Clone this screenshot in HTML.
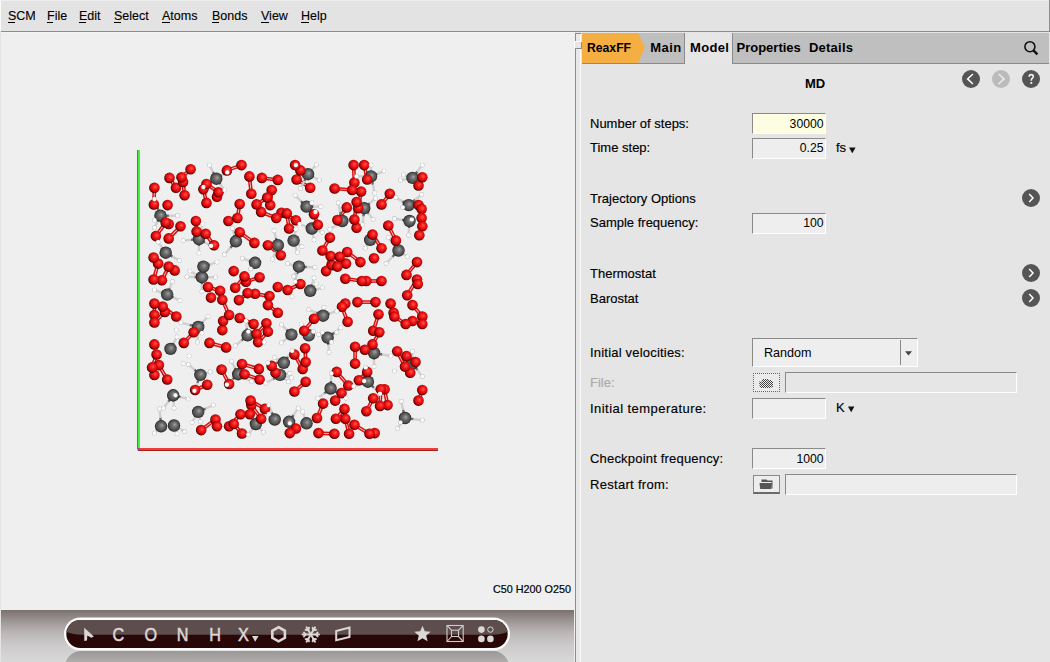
<!DOCTYPE html>
<html><head><meta charset="utf-8">
<style>
html,body{margin:0;padding:0;}
body{width:1050px;height:662px;position:relative;overflow:hidden;background:#e5e5e5;font-family:"Liberation Sans",sans-serif;color:#000;}
.a{position:absolute;}
.t{position:absolute;white-space:pre;line-height:1;}
#menubar{left:0;top:0;width:1050px;height:31px;background:#e3e3e3;}
#menuline{left:1px;top:31px;width:1049px;height:1px;background:#8e8e8e;}
.mi{font-size:12.5px;-webkit-text-stroke:0.12px #000;}
.mi u{text-decoration:none;border-bottom:1px solid #000;}
#viewer{left:1px;top:32px;width:574px;height:630px;background:#efefef;}
.lbl{font-size:13px;color:#000;-webkit-text-stroke:0.15px #000;}
.inp{position:absolute;box-sizing:border-box;border-top:1px solid #8a8a8a;border-left:1px solid #8a8a8a;border-right:1px solid #fff;border-bottom:1px solid #fff;background:#eeeeee;}
.val{font-size:12.2px;text-align:right;}
.circ{position:absolute;width:18px;height:18px;border-radius:50%;background:#555;}
</style></head><body>
<!-- menu -->
<div class="a" id="menubar"></div>
<div class="a" style="left:0;top:0;width:1px;height:31px;background:#fafafa"></div>
<div class="a" id="menuline"></div>
<div class="a" style="left:1049px;top:0;width:1px;height:32px;background:#8e8e8e"></div>
<div class="a" style="left:0;top:0;width:1049px;height:1px;background:#eeeeee"></div>
<div class="t mi" style="left:8px;top:9.5px">SCM</div>
<div class="t mi" style="left:47px;top:9.5px">File</div>
<div class="t mi" style="left:79px;top:9.5px">Edit</div>
<div class="t mi" style="left:114px;top:9.5px">Select</div>
<div class="t mi" style="left:162px;top:9.5px">Atoms</div>
<div class="t mi" style="left:212px;top:9.5px">Bonds</div>
<div class="t mi" style="left:261px;top:9.5px">View</div>
<div class="t mi" style="left:301px;top:9.5px">Help</div>
<div class="a" style="left:8px;top:22px;width:7px;height:1px;background:#000"></div>
<div class="a" style="left:47px;top:22px;width:6px;height:1px;background:#000"></div>
<div class="a" style="left:79px;top:22px;width:7px;height:1px;background:#000"></div>
<div class="a" style="left:114px;top:22px;width:7px;height:1px;background:#000"></div>
<div class="a" style="left:162px;top:22px;width:8px;height:1px;background:#000"></div>
<div class="a" style="left:212px;top:22px;width:7px;height:1px;background:#000"></div>
<div class="a" style="left:261px;top:22px;width:8px;height:1px;background:#000"></div>
<div class="a" style="left:301px;top:22px;width:8px;height:1px;background:#000"></div>

<!-- left viewer -->
<div class="a" id="viewer"></div>
<div class="a" style="left:0;top:32px;width:1px;height:630px;background:#e4e4e4"></div>
<div class="a" style="left:1px;top:32px;width:574px;height:1px;background:#f4f4f4"></div>
<div id="mol"><svg class="a" style="left:0;top:0" width="575" height="662" viewBox="0 0 575 662">
<defs>
<radialGradient id="gO" cx="0.54" cy="0.46" fx="0.6" fy="0.4" r="0.55"><stop offset="0" stop-color="#ff5656"/><stop offset="0.4" stop-color="#f41a1a"/><stop offset="0.72" stop-color="#d00606"/><stop offset="0.9" stop-color="#700000"/><stop offset="1" stop-color="#200000"/></radialGradient>
<radialGradient id="gC" cx="0.5" cy="0.5" fx="0.58" fy="0.4" r="0.5"><stop offset="0" stop-color="#a0a0a0"/><stop offset="0.4" stop-color="#6e6e6e"/><stop offset="0.8" stop-color="#4c4c4c"/><stop offset="1" stop-color="#1e1e1e"/></radialGradient>
<radialGradient id="gH" cx="0.5" cy="0.5" fx="0.55" fy="0.45" r="0.5"><stop offset="0" stop-color="#fff"/><stop offset="0.7" stop-color="#f6f6f6"/><stop offset="1" stop-color="#b0b0b0"/></radialGradient>
</defs>
<rect x="137" y="150" width="3" height="299" fill="#44f044"/><rect x="137" y="150" width="1" height="299" fill="#2a9a2a"/>
<rect x="138" y="448" width="300" height="3" fill="#f23c3c"/><rect x="138" y="450" width="300" height="1" fill="#a02020"/>
<rect x="137.5" y="448.5" width="2" height="2" fill="#5050e8"/>
<g><line x1="276.5" y1="372.1" x2="272.7" y2="365.3" stroke="#e01010" stroke-width="1.5"/><line x1="274.5" y1="373.2" x2="270.8" y2="366.4" stroke="#e01010" stroke-width="1.5"/><line x1="278.4" y1="311.8" x2="268.6" y2="304.3" stroke="#e01010" stroke-width="1.5"/><line x1="277.1" y1="313.6" x2="267.3" y2="306.0" stroke="#e01010" stroke-width="1.5"/><line x1="227.2" y1="171.4" x2="241.9" y2="166.1" stroke="#e01010" stroke-width="1.5"/><line x1="226.5" y1="169.4" x2="241.1" y2="164.1" stroke="#e01010" stroke-width="1.5"/><line x1="371.6" y1="235.2" x2="380.6" y2="248.8" stroke="#e01010" stroke-width="1.5"/><line x1="373.4" y1="234.0" x2="382.5" y2="247.6" stroke="#e01010" stroke-width="1.5"/><line x1="288.1" y1="291.0" x2="300.9" y2="285.0" stroke="#e01010" stroke-width="1.5"/><line x1="287.1" y1="289.0" x2="300.0" y2="283.0" stroke="#e01010" stroke-width="1.5"/><line x1="313.2" y1="318.0" x2="303.3" y2="330.1" stroke="#e01010" stroke-width="1.5"/><line x1="314.9" y1="319.4" x2="305.1" y2="331.5" stroke="#e01010" stroke-width="1.5"/><line x1="328.9" y1="237.1" x2="321.4" y2="249.9" stroke="#e01010" stroke-width="1.5"/><line x1="330.8" y1="238.2" x2="323.3" y2="251.0" stroke="#e01010" stroke-width="1.5"/><line x1="209.2" y1="344.0" x2="225.8" y2="348.5" stroke="#e01010" stroke-width="1.5"/><line x1="209.8" y1="341.8" x2="226.4" y2="346.4" stroke="#e01010" stroke-width="1.5"/><line x1="266.6" y1="196.7" x2="256.0" y2="203.5" stroke="#e01010" stroke-width="1.5"/><line x1="267.8" y1="198.5" x2="257.2" y2="205.3" stroke="#e01010" stroke-width="1.5"/><line x1="277.9" y1="178.8" x2="262.0" y2="176.9" stroke="#e01010" stroke-width="1.5"/><line x1="277.6" y1="181.0" x2="261.8" y2="179.0" stroke="#e01010" stroke-width="1.5"/><line x1="192.8" y1="331.6" x2="183.0" y2="342.2" stroke="#e01010" stroke-width="1.5"/><line x1="194.4" y1="333.1" x2="184.6" y2="343.6" stroke="#e01010" stroke-width="1.5"/><line x1="405.9" y1="366.1" x2="398.1" y2="350.7" stroke="#e01010" stroke-width="1.5"/><line x1="404.0" y1="367.1" x2="396.2" y2="351.7" stroke="#e01010" stroke-width="1.5"/><line x1="285.7" y1="213.6" x2="288.0" y2="228.7" stroke="#e01010" stroke-width="1.5"/><line x1="287.9" y1="213.3" x2="290.2" y2="228.4" stroke="#e01010" stroke-width="1.5"/><line x1="301.2" y1="169.6" x2="295.9" y2="164.3" stroke="#e01010" stroke-width="1.5"/><line x1="299.6" y1="171.2" x2="294.4" y2="165.9" stroke="#e01010" stroke-width="1.5"/><line x1="229.9" y1="427.0" x2="241.3" y2="415.0" stroke="#e01010" stroke-width="1.5"/><line x1="228.3" y1="425.5" x2="239.7" y2="413.5" stroke="#e01010" stroke-width="1.5"/><line x1="375.5" y1="301.0" x2="357.4" y2="301.0" stroke="#e01010" stroke-width="1.5"/><line x1="375.5" y1="303.2" x2="357.4" y2="303.2" stroke="#e01010" stroke-width="1.5"/><line x1="204.8" y1="234.5" x2="213.1" y2="246.0" stroke="#e01010" stroke-width="1.5"/><line x1="206.6" y1="233.2" x2="214.9" y2="244.7" stroke="#e01010" stroke-width="1.5"/><line x1="318.1" y1="418.4" x2="324.1" y2="404.1" stroke="#e01010" stroke-width="1.5"/><line x1="316.0" y1="417.5" x2="322.1" y2="403.2" stroke="#e01010" stroke-width="1.5"/><line x1="362.1" y1="279.9" x2="345.4" y2="277.6" stroke="#e01010" stroke-width="1.5"/><line x1="361.8" y1="282.1" x2="345.1" y2="279.8" stroke="#e01010" stroke-width="1.5"/><line x1="348.6" y1="321.4" x2="343.0" y2="306.5" stroke="#e01010" stroke-width="1.5"/><line x1="346.5" y1="322.1" x2="340.9" y2="307.2" stroke="#e01010" stroke-width="1.5"/><line x1="295.1" y1="392.4" x2="306.4" y2="382.6" stroke="#e01010" stroke-width="1.5"/><line x1="293.7" y1="390.7" x2="305.0" y2="380.9" stroke="#e01010" stroke-width="1.5"/><line x1="262.0" y1="418.1" x2="252.2" y2="404.5" stroke="#e01010" stroke-width="1.5"/><line x1="260.3" y1="419.4" x2="250.4" y2="405.8" stroke="#e01010" stroke-width="1.5"/><line x1="355.5" y1="202.0" x2="353.3" y2="219.3" stroke="#e01010" stroke-width="1.5"/><line x1="357.7" y1="202.3" x2="355.4" y2="219.6" stroke="#e01010" stroke-width="1.5"/><line x1="236.0" y1="288.5" x2="245.4" y2="277.1" stroke="#e01010" stroke-width="1.5"/><line x1="234.3" y1="287.1" x2="243.7" y2="275.7" stroke="#e01010" stroke-width="1.5"/><line x1="281.5" y1="254.4" x2="268.6" y2="244.3" stroke="#e01010" stroke-width="1.5"/><line x1="280.1" y1="256.2" x2="267.3" y2="246.0" stroke="#e01010" stroke-width="1.5"/><line x1="254.0" y1="323.0" x2="240.1" y2="317.0" stroke="#e01010" stroke-width="1.5"/><line x1="253.2" y1="325.0" x2="239.3" y2="319.0" stroke="#e01010" stroke-width="1.5"/><line x1="352.2" y1="188.9" x2="334.7" y2="187.4" stroke="#e01010" stroke-width="1.5"/><line x1="352.0" y1="191.1" x2="334.5" y2="189.6" stroke="#e01010" stroke-width="1.5"/><line x1="355.4" y1="182.4" x2="354.7" y2="165.1" stroke="#e01010" stroke-width="1.5"/><line x1="353.3" y1="182.5" x2="352.5" y2="165.2" stroke="#e01010" stroke-width="1.5"/><line x1="313.0" y1="214.6" x2="316.8" y2="225.1" stroke="#e01010" stroke-width="1.5"/><line x1="315.1" y1="213.8" x2="318.8" y2="224.4" stroke="#e01010" stroke-width="1.5"/><line x1="276.7" y1="217.0" x2="261.6" y2="210.9" stroke="#e01010" stroke-width="1.5"/><line x1="275.8" y1="219.0" x2="260.7" y2="213.0" stroke="#e01010" stroke-width="1.5"/><line x1="361.1" y1="261.2" x2="347.8" y2="251.1" stroke="#e01010" stroke-width="1.5"/><line x1="359.7" y1="263.0" x2="346.5" y2="252.8" stroke="#e01010" stroke-width="1.5"/><line x1="327.2" y1="271.5" x2="331.7" y2="256.4" stroke="#e01010" stroke-width="1.5"/><line x1="325.0" y1="270.8" x2="329.6" y2="255.7" stroke="#e01010" stroke-width="1.5"/><line x1="408.2" y1="295.9" x2="418.0" y2="280.0" stroke="#e01010" stroke-width="1.5"/><line x1="406.3" y1="294.7" x2="416.1" y2="278.9" stroke="#e01010" stroke-width="1.5"/><line x1="411.7" y1="305.9" x2="421.5" y2="317.2" stroke="#e01010" stroke-width="1.5"/><line x1="413.3" y1="304.4" x2="423.2" y2="315.7" stroke="#e01010" stroke-width="1.5"/><line x1="255.0" y1="242.0" x2="240.3" y2="231.4" stroke="#e01010" stroke-width="1.5"/><line x1="253.7" y1="243.8" x2="239.1" y2="233.2" stroke="#e01010" stroke-width="1.5"/><line x1="157.1" y1="263.3" x2="152.5" y2="279.2" stroke="#e01010" stroke-width="1.5"/><line x1="159.2" y1="263.9" x2="154.7" y2="279.8" stroke="#e01010" stroke-width="1.5"/><line x1="412.2" y1="322.0" x2="422.0" y2="325.1" stroke="#e01010" stroke-width="1.5"/><line x1="412.8" y1="319.9" x2="422.6" y2="323.0" stroke="#e01010" stroke-width="1.5"/><line x1="220.6" y1="370.1" x2="228.2" y2="384.5" stroke="#e01010" stroke-width="1.5"/><line x1="222.5" y1="369.1" x2="230.1" y2="383.5" stroke="#e01010" stroke-width="1.5"/><line x1="153.3" y1="303.6" x2="153.3" y2="315.0" stroke="#e01010" stroke-width="1.5"/><line x1="155.5" y1="303.6" x2="155.5" y2="315.0" stroke="#e01010" stroke-width="1.5"/><line x1="366.4" y1="371.1" x2="358.1" y2="379.4" stroke="#e01010" stroke-width="1.5"/><line x1="368.0" y1="372.7" x2="359.7" y2="381.0" stroke="#e01010" stroke-width="1.5"/><line x1="267.1" y1="330.8" x2="257.3" y2="341.4" stroke="#e01010" stroke-width="1.5"/><line x1="268.8" y1="332.3" x2="258.9" y2="342.9" stroke="#e01010" stroke-width="1.5"/><line x1="214.9" y1="418.6" x2="200.5" y2="429.2" stroke="#e01010" stroke-width="1.5"/><line x1="216.2" y1="420.4" x2="201.8" y2="430.9" stroke="#e01010" stroke-width="1.5"/><line x1="303.6" y1="368.3" x2="295.3" y2="354.0" stroke="#e01010" stroke-width="1.5"/><line x1="301.7" y1="369.4" x2="293.4" y2="355.1" stroke="#e01010" stroke-width="1.5"/><line x1="182.3" y1="178.0" x2="191.3" y2="170.2" stroke="#e01010" stroke-width="1.5"/><line x1="180.8" y1="176.4" x2="189.9" y2="168.5" stroke="#e01010" stroke-width="1.5"/><line x1="419.6" y1="186.0" x2="423.3" y2="177.6" stroke="#e01010" stroke-width="1.5"/><line x1="417.5" y1="185.0" x2="421.3" y2="176.7" stroke="#e01010" stroke-width="1.5"/><line x1="259.2" y1="367.8" x2="242.3" y2="363.0" stroke="#e01010" stroke-width="1.5"/><line x1="258.6" y1="369.9" x2="241.7" y2="365.1" stroke="#e01010" stroke-width="1.5"/><line x1="265.5" y1="408.0" x2="251.1" y2="399.7" stroke="#e01010" stroke-width="1.5"/><line x1="264.4" y1="409.9" x2="250.0" y2="401.6" stroke="#e01010" stroke-width="1.5"/><line x1="221.3" y1="300.3" x2="228.1" y2="315.4" stroke="#e01010" stroke-width="1.5"/><line x1="223.3" y1="299.4" x2="230.1" y2="314.5" stroke="#e01010" stroke-width="1.5"/><line x1="281.0" y1="213.7" x2="295.4" y2="221.2" stroke="#e01010" stroke-width="1.5"/><line x1="282.1" y1="211.7" x2="296.4" y2="219.3" stroke="#e01010" stroke-width="1.5"/><line x1="360.1" y1="191.3" x2="357.0" y2="208.0" stroke="#e01010" stroke-width="1.5"/><line x1="362.2" y1="191.7" x2="359.2" y2="208.4" stroke="#e01010" stroke-width="1.5"/><line x1="259.3" y1="276.1" x2="245.7" y2="280.7" stroke="#e01010" stroke-width="1.5"/><line x1="260.0" y1="278.2" x2="246.4" y2="282.8" stroke="#e01010" stroke-width="1.5"/><line x1="223.4" y1="330.2" x2="224.2" y2="321.1" stroke="#e01010" stroke-width="1.5"/><line x1="221.2" y1="330.0" x2="222.0" y2="320.9" stroke="#e01010" stroke-width="1.5"/><line x1="336.0" y1="401.3" x2="342.4" y2="393.8" stroke="#e01010" stroke-width="1.5"/><line x1="334.3" y1="399.9" x2="340.7" y2="392.3" stroke="#e01010" stroke-width="1.5"/><line x1="194.8" y1="221.1" x2="195.5" y2="231.6" stroke="#e01010" stroke-width="1.5"/><line x1="197.0" y1="220.9" x2="197.7" y2="231.5" stroke="#e01010" stroke-width="1.5"/><line x1="164.8" y1="221.9" x2="155.0" y2="235.5" stroke="#e01010" stroke-width="1.5"/><line x1="166.6" y1="223.2" x2="156.8" y2="236.7" stroke="#e01010" stroke-width="1.5"/><line x1="393.8" y1="317.4" x2="405.1" y2="324.9" stroke="#e01010" stroke-width="1.5"/><line x1="395.0" y1="315.6" x2="406.3" y2="323.1" stroke="#e01010" stroke-width="1.5"/><line x1="388.7" y1="404.9" x2="385.6" y2="389.1" stroke="#e01010" stroke-width="1.5"/><line x1="386.5" y1="405.3" x2="383.5" y2="389.5" stroke="#e01010" stroke-width="1.5"/><line x1="387.4" y1="226.0" x2="394.9" y2="241.1" stroke="#e01010" stroke-width="1.5"/><line x1="389.3" y1="225.0" x2="396.9" y2="240.1" stroke="#e01010" stroke-width="1.5"/><line x1="306.8" y1="362.0" x2="306.2" y2="348.1" stroke="#e01010" stroke-width="1.5"/><line x1="304.6" y1="362.1" x2="304.0" y2="348.2" stroke="#e01010" stroke-width="1.5"/><line x1="162.9" y1="280.7" x2="169.7" y2="267.1" stroke="#e01010" stroke-width="1.5"/><line x1="160.9" y1="279.7" x2="167.7" y2="266.1" stroke="#e01010" stroke-width="1.5"/><line x1="168.1" y1="378.9" x2="159.8" y2="364.6" stroke="#e01010" stroke-width="1.5"/><line x1="166.2" y1="380.0" x2="157.9" y2="365.7" stroke="#e01010" stroke-width="1.5"/><line x1="260.0" y1="378.4" x2="244.9" y2="373.1" stroke="#e01010" stroke-width="1.5"/><line x1="259.3" y1="380.5" x2="244.2" y2="375.2" stroke="#e01010" stroke-width="1.5"/><line x1="370.0" y1="432.9" x2="354.9" y2="423.8" stroke="#e01010" stroke-width="1.5"/><line x1="368.9" y1="434.8" x2="353.8" y2="425.7" stroke="#e01010" stroke-width="1.5"/><line x1="378.3" y1="331.8" x2="371.5" y2="343.9" stroke="#e01010" stroke-width="1.5"/><line x1="380.2" y1="332.9" x2="373.4" y2="345.0" stroke="#e01010" stroke-width="1.5"/><line x1="389.6" y1="304.0" x2="392.6" y2="313.0" stroke="#e01010" stroke-width="1.5"/><line x1="391.6" y1="303.3" x2="394.7" y2="312.3" stroke="#e01010" stroke-width="1.5"/><line x1="350.1" y1="433.6" x2="346.4" y2="418.5" stroke="#e01010" stroke-width="1.5"/><line x1="348.0" y1="434.1" x2="344.2" y2="419.0" stroke="#e01010" stroke-width="1.5"/><line x1="185.7" y1="195.2" x2="184.1" y2="181.9" stroke="#e01010" stroke-width="1.5"/><line x1="183.5" y1="195.4" x2="182.0" y2="182.1" stroke="#e01010" stroke-width="1.5"/><line x1="269.6" y1="295.0" x2="255.3" y2="292.7" stroke="#e01010" stroke-width="1.5"/><line x1="269.3" y1="297.2" x2="254.9" y2="294.9" stroke="#e01010" stroke-width="1.5"/><line x1="332.3" y1="266.2" x2="346.2" y2="264.7" stroke="#e01010" stroke-width="1.5"/><line x1="332.0" y1="264.0" x2="345.9" y2="262.5" stroke="#e01010" stroke-width="1.5"/><line x1="202.4" y1="189.5" x2="205.4" y2="203.1" stroke="#e01010" stroke-width="1.5"/><line x1="204.5" y1="189.0" x2="207.5" y2="202.6" stroke="#e01010" stroke-width="1.5"/><line x1="238.5" y1="218.2" x2="240.8" y2="204.2" stroke="#e01010" stroke-width="1.5"/><line x1="236.3" y1="217.8" x2="238.6" y2="203.9" stroke="#e01010" stroke-width="1.5"/><line x1="176.9" y1="315.6" x2="163.3" y2="305.8" stroke="#e01010" stroke-width="1.5"/><line x1="175.6" y1="317.4" x2="162.0" y2="307.5" stroke="#e01010" stroke-width="1.5"/><line x1="195.6" y1="391.0" x2="207.7" y2="385.8" stroke="#e01010" stroke-width="1.5"/><line x1="194.7" y1="389.0" x2="206.8" y2="383.7" stroke="#e01010" stroke-width="1.5"/><line x1="338.6" y1="256.4" x2="336.4" y2="266.4" stroke="#e01010" stroke-width="1.5"/><line x1="340.8" y1="256.9" x2="338.5" y2="266.9" stroke="#e01010" stroke-width="1.5"/><line x1="232.8" y1="424.7" x2="241.1" y2="434.2" stroke="#e01010" stroke-width="1.5"/><line x1="234.5" y1="423.3" x2="242.8" y2="432.7" stroke="#e01010" stroke-width="1.5"/><line x1="381.1" y1="405.9" x2="381.9" y2="389.3" stroke="#e01010" stroke-width="1.5"/><line x1="378.9" y1="405.8" x2="379.7" y2="389.2" stroke="#e01010" stroke-width="1.5"/><line x1="318.5" y1="434.2" x2="334.4" y2="434.9" stroke="#e01010" stroke-width="1.5"/><line x1="318.6" y1="432.0" x2="334.5" y2="432.7" stroke="#e01010" stroke-width="1.5"/><line x1="252.4" y1="193.7" x2="250.5" y2="176.3" stroke="#e01010" stroke-width="1.5"/><line x1="250.2" y1="193.9" x2="248.3" y2="176.6" stroke="#e01010" stroke-width="1.5"/><line x1="419.6" y1="401.0" x2="423.4" y2="390.4" stroke="#e01010" stroke-width="1.5"/><line x1="417.5" y1="400.2" x2="421.3" y2="389.7" stroke="#e01010" stroke-width="1.5"/><line x1="389.0" y1="193.1" x2="380.7" y2="203.7" stroke="#e01010" stroke-width="1.5"/><line x1="390.7" y1="194.5" x2="382.4" y2="205.1" stroke="#e01010" stroke-width="1.5"/><line x1="349.1" y1="384.8" x2="337.5" y2="371.2" stroke="#e01010" stroke-width="1.5"/><line x1="347.5" y1="386.2" x2="335.8" y2="372.6" stroke="#e01010" stroke-width="1.5"/><line x1="265.6" y1="322.5" x2="255.8" y2="333.1" stroke="#e01010" stroke-width="1.5"/><line x1="267.2" y1="324.0" x2="257.4" y2="334.6" stroke="#e01010" stroke-width="1.5"/><line x1="153.1" y1="367.7" x2="157.7" y2="354.9" stroke="#e01010" stroke-width="1.5"/><line x1="151.0" y1="367.0" x2="155.6" y2="354.2" stroke="#e01010" stroke-width="1.5"/><line x1="372.3" y1="397.8" x2="365.5" y2="410.7" stroke="#e01010" stroke-width="1.5"/><line x1="374.2" y1="398.9" x2="367.4" y2="411.7" stroke="#e01010" stroke-width="1.5"/><line x1="164.1" y1="311.2" x2="153.6" y2="321.7" stroke="#e01010" stroke-width="1.5"/><line x1="165.7" y1="312.7" x2="155.1" y2="323.3" stroke="#e01010" stroke-width="1.5"/><line x1="345.9" y1="206.7" x2="336.6" y2="219.3" stroke="#e01010" stroke-width="1.5"/><line x1="347.7" y1="208.1" x2="338.3" y2="220.6" stroke="#e01010" stroke-width="1.5"/><line x1="411.3" y1="372.4" x2="407.5" y2="355.8" stroke="#e01010" stroke-width="1.5"/><line x1="409.2" y1="372.9" x2="405.4" y2="356.3" stroke="#e01010" stroke-width="1.5"/><line x1="176.9" y1="187.2" x2="170.4" y2="177.3" stroke="#e01010" stroke-width="1.5"/><line x1="175.0" y1="188.4" x2="168.5" y2="178.6" stroke="#e01010" stroke-width="1.5"/><line x1="356.2" y1="363.6" x2="356.2" y2="346.7" stroke="#e01010" stroke-width="1.5"/><line x1="354.0" y1="363.6" x2="354.0" y2="346.7" stroke="#e01010" stroke-width="1.5"/><line x1="377.5" y1="313.9" x2="372.2" y2="330.5" stroke="#e01010" stroke-width="1.5"/><line x1="379.6" y1="314.5" x2="374.3" y2="331.1" stroke="#e01010" stroke-width="1.5"/><line x1="153.3" y1="187.7" x2="152.8" y2="204.4" stroke="#e01010" stroke-width="1.5"/><line x1="155.5" y1="187.8" x2="155.0" y2="204.4" stroke="#e01010" stroke-width="1.5"/><line x1="270.6" y1="189.9" x2="269.1" y2="205.0" stroke="#e01010" stroke-width="1.5"/><line x1="272.8" y1="190.1" x2="271.3" y2="205.2" stroke="#e01010" stroke-width="1.5"/><line x1="310.8" y1="186.8" x2="297.2" y2="178.5" stroke="#e01010" stroke-width="1.5"/><line x1="309.7" y1="188.7" x2="296.1" y2="180.4" stroke="#e01010" stroke-width="1.5"/><line x1="420.5" y1="209.0" x2="421.2" y2="226.3" stroke="#e01010" stroke-width="1.5"/><line x1="422.7" y1="208.9" x2="423.4" y2="226.2" stroke="#e01010" stroke-width="1.5"/><line x1="368.3" y1="179.2" x2="365.2" y2="164.9" stroke="#e01010" stroke-width="1.5"/><line x1="366.1" y1="179.7" x2="363.1" y2="165.3" stroke="#e01010" stroke-width="1.5"/><line x1="205.8" y1="184.9" x2="217.9" y2="193.2" stroke="#e01010" stroke-width="1.5"/><line x1="207.1" y1="183.1" x2="219.2" y2="191.4" stroke="#e01010" stroke-width="1.5"/><line x1="246.9" y1="292.2" x2="238.2" y2="299.3" stroke="#e01010" stroke-width="1.5"/><line x1="248.3" y1="293.9" x2="239.6" y2="301.0" stroke="#e01010" stroke-width="1.5"/><line x1="381.5" y1="279.9" x2="366.4" y2="279.9" stroke="#e01010" stroke-width="1.5"/><line x1="381.5" y1="282.1" x2="366.4" y2="282.1" stroke="#e01010" stroke-width="1.5"/><line x1="417.5" y1="205.4" x2="420.5" y2="218.2" stroke="#e01010" stroke-width="1.5"/><line x1="419.6" y1="204.9" x2="422.6" y2="217.7" stroke="#e01010" stroke-width="1.5"/><line x1="179.7" y1="225.5" x2="167.9" y2="237.6" stroke="#e01010" stroke-width="1.5"/><line x1="181.3" y1="227.1" x2="169.5" y2="239.1" stroke="#e01010" stroke-width="1.5"/><line x1="295.2" y1="427.7" x2="289.2" y2="432.2" stroke="#e01010" stroke-width="1.5"/><line x1="296.6" y1="429.4" x2="290.5" y2="434.0" stroke="#e01010" stroke-width="1.5"/><line x1="343.7" y1="408.2" x2="335.1" y2="418.0" stroke="#e01010" stroke-width="1.5"/><line x1="345.4" y1="409.6" x2="336.7" y2="419.5" stroke="#e01010" stroke-width="1.5"/><line x1="207.6" y1="288.1" x2="219.7" y2="291.8" stroke="#e01010" stroke-width="1.5"/><line x1="208.3" y1="286.0" x2="220.4" y2="289.7" stroke="#e01010" stroke-width="1.5"/><line x1="407.3" y1="275.6" x2="417.9" y2="262.8" stroke="#e01010" stroke-width="1.5"/><line x1="405.6" y1="274.2" x2="416.2" y2="261.4" stroke="#e01010" stroke-width="1.5"/><line x1="173.2" y1="395.3" x2="180.8" y2="397.2" stroke="#6a6a6a" stroke-width="2.4"/><line x1="180.8" y1="397.2" x2="188.3" y2="399.1" stroke="#d0d0d0" stroke-width="2.4"/><line x1="306.5" y1="206.6" x2="300.8" y2="201.0" stroke="#6a6a6a" stroke-width="2.4"/><line x1="300.8" y1="201.0" x2="295.1" y2="195.3" stroke="#d0d0d0" stroke-width="2.4"/><line x1="408.7" y1="205.1" x2="402.3" y2="201.4" stroke="#6a6a6a" stroke-width="2.4"/><line x1="402.3" y1="201.4" x2="395.9" y2="197.6" stroke="#d0d0d0" stroke-width="2.4"/><line x1="289.1" y1="421.8" x2="293.6" y2="415.0" stroke="#6a6a6a" stroke-width="2.4"/><line x1="293.6" y1="415.0" x2="298.2" y2="408.2" stroke="#d0d0d0" stroke-width="2.4"/><line x1="200.4" y1="374.9" x2="197.4" y2="382.9" stroke="#6a6a6a" stroke-width="2.4"/><line x1="197.4" y1="382.9" x2="194.4" y2="390.8" stroke="#d0d0d0" stroke-width="2.4"/><line x1="167.2" y1="294.6" x2="173.6" y2="297.6" stroke="#6a6a6a" stroke-width="2.4"/><line x1="173.6" y1="297.6" x2="180.0" y2="300.6" stroke="#d0d0d0" stroke-width="2.4"/><line x1="367.9" y1="381.7" x2="374.0" y2="387.8" stroke="#6a6a6a" stroke-width="2.4"/><line x1="374.0" y1="387.8" x2="380.0" y2="393.8" stroke="#d0d0d0" stroke-width="2.4"/><line x1="405.0" y1="418.0" x2="403.1" y2="409.7" stroke="#6a6a6a" stroke-width="2.4"/><line x1="403.1" y1="409.7" x2="401.2" y2="401.4" stroke="#d0d0d0" stroke-width="2.4"/><line x1="308.0" y1="174.2" x2="304.2" y2="181.3" stroke="#6a6a6a" stroke-width="2.4"/><line x1="304.2" y1="181.3" x2="300.4" y2="188.5" stroke="#d0d0d0" stroke-width="2.4"/><line x1="201.9" y1="277.2" x2="201.9" y2="284.4" stroke="#6a6a6a" stroke-width="2.4"/><line x1="201.9" y1="284.4" x2="201.9" y2="291.5" stroke="#d0d0d0" stroke-width="2.4"/><line x1="408.7" y1="205.1" x2="405.7" y2="206.3" stroke="#6a6a6a" stroke-width="2.4"/><line x1="405.7" y1="206.3" x2="402.7" y2="207.4" stroke="#d0d0d0" stroke-width="2.4"/><line x1="306.5" y1="423.3" x2="304.6" y2="417.6" stroke="#6a6a6a" stroke-width="2.4"/><line x1="304.6" y1="417.6" x2="302.7" y2="411.9" stroke="#d0d0d0" stroke-width="2.4"/><line x1="216.3" y1="178.7" x2="209.9" y2="182.9" stroke="#6a6a6a" stroke-width="2.4"/><line x1="209.9" y1="182.9" x2="203.4" y2="187.0" stroke="#d0d0d0" stroke-width="2.4"/><line x1="364.2" y1="208.2" x2="369.8" y2="203.2" stroke="#6a6a6a" stroke-width="2.4"/><line x1="369.8" y1="203.2" x2="375.5" y2="198.3" stroke="#d0d0d0" stroke-width="2.4"/><line x1="173.2" y1="395.3" x2="174.4" y2="395.3" stroke="#6a6a6a" stroke-width="2.4"/><line x1="174.4" y1="395.3" x2="175.5" y2="395.3" stroke="#d0d0d0" stroke-width="2.4"/><line x1="371.0" y1="176.4" x2="372.9" y2="184.7" stroke="#6a6a6a" stroke-width="2.4"/><line x1="372.9" y1="184.7" x2="374.7" y2="193.1" stroke="#d0d0d0" stroke-width="2.4"/><line x1="160.4" y1="215.7" x2="168.9" y2="215.7" stroke="#6a6a6a" stroke-width="2.4"/><line x1="168.9" y1="215.7" x2="177.5" y2="215.7" stroke="#d0d0d0" stroke-width="2.4"/><line x1="173.2" y1="395.3" x2="173.6" y2="401.7" stroke="#6a6a6a" stroke-width="2.4"/><line x1="173.6" y1="401.7" x2="174.0" y2="408.2" stroke="#d0d0d0" stroke-width="2.4"/><line x1="198.2" y1="327.0" x2="203.1" y2="321.8" stroke="#6a6a6a" stroke-width="2.4"/><line x1="203.1" y1="321.8" x2="208.0" y2="316.5" stroke="#d0d0d0" stroke-width="2.4"/><line x1="167.2" y1="294.6" x2="169.8" y2="288.1" stroke="#6a6a6a" stroke-width="2.4"/><line x1="169.8" y1="288.1" x2="172.5" y2="281.7" stroke="#d0d0d0" stroke-width="2.4"/><line x1="298.9" y1="266.6" x2="297.0" y2="274.2" stroke="#6a6a6a" stroke-width="2.4"/><line x1="297.0" y1="274.2" x2="295.1" y2="281.7" stroke="#d0d0d0" stroke-width="2.4"/><line x1="280.0" y1="374.9" x2="284.2" y2="378.3" stroke="#6a6a6a" stroke-width="2.4"/><line x1="284.2" y1="378.3" x2="288.3" y2="381.7" stroke="#d0d0d0" stroke-width="2.4"/><line x1="409.5" y1="221.0" x2="401.9" y2="219.9" stroke="#6a6a6a" stroke-width="2.4"/><line x1="401.9" y1="219.9" x2="394.4" y2="218.7" stroke="#d0d0d0" stroke-width="2.4"/><line x1="323.1" y1="315.7" x2="315.9" y2="312.7" stroke="#6a6a6a" stroke-width="2.4"/><line x1="315.9" y1="312.7" x2="308.7" y2="309.7" stroke="#d0d0d0" stroke-width="2.4"/><line x1="364.2" y1="208.2" x2="368.7" y2="213.8" stroke="#6a6a6a" stroke-width="2.4"/><line x1="368.7" y1="213.8" x2="373.2" y2="219.5" stroke="#d0d0d0" stroke-width="2.4"/><line x1="412.5" y1="177.9" x2="406.5" y2="179.1" stroke="#6a6a6a" stroke-width="2.4"/><line x1="406.5" y1="179.1" x2="400.4" y2="180.2" stroke="#d0d0d0" stroke-width="2.4"/><line x1="274.7" y1="419.5" x2="271.7" y2="412.3" stroke="#6a6a6a" stroke-width="2.4"/><line x1="271.7" y1="412.3" x2="268.7" y2="405.1" stroke="#d0d0d0" stroke-width="2.4"/><line x1="274.7" y1="419.5" x2="271.7" y2="416.8" stroke="#6a6a6a" stroke-width="2.4"/><line x1="271.7" y1="416.8" x2="268.7" y2="414.2" stroke="#d0d0d0" stroke-width="2.4"/><line x1="306.5" y1="206.6" x2="309.1" y2="204.8" stroke="#6a6a6a" stroke-width="2.4"/><line x1="309.1" y1="204.8" x2="311.8" y2="202.9" stroke="#d0d0d0" stroke-width="2.4"/><line x1="409.5" y1="221.0" x2="410.6" y2="220.2" stroke="#6a6a6a" stroke-width="2.4"/><line x1="410.6" y1="220.2" x2="411.8" y2="219.5" stroke="#d0d0d0" stroke-width="2.4"/><line x1="198.2" y1="411.9" x2="199.3" y2="416.8" stroke="#6a6a6a" stroke-width="2.4"/><line x1="199.3" y1="416.8" x2="200.4" y2="421.8" stroke="#d0d0d0" stroke-width="2.4"/><line x1="280.0" y1="374.9" x2="285.7" y2="376.4" stroke="#6a6a6a" stroke-width="2.4"/><line x1="285.7" y1="376.4" x2="291.4" y2="377.9" stroke="#d0d0d0" stroke-width="2.4"/><line x1="198.2" y1="327.0" x2="189.5" y2="324.8" stroke="#6a6a6a" stroke-width="2.4"/><line x1="189.5" y1="324.8" x2="180.8" y2="322.5" stroke="#d0d0d0" stroke-width="2.4"/><line x1="198.2" y1="411.9" x2="195.1" y2="417.2" stroke="#6a6a6a" stroke-width="2.4"/><line x1="195.1" y1="417.2" x2="192.1" y2="422.5" stroke="#d0d0d0" stroke-width="2.4"/><line x1="405.0" y1="418.0" x2="402.7" y2="420.2" stroke="#6a6a6a" stroke-width="2.4"/><line x1="402.7" y1="420.2" x2="400.4" y2="422.5" stroke="#d0d0d0" stroke-width="2.4"/><line x1="201.9" y1="277.2" x2="194.4" y2="277.0" stroke="#6a6a6a" stroke-width="2.4"/><line x1="194.4" y1="277.0" x2="186.8" y2="276.9" stroke="#d0d0d0" stroke-width="2.4"/><line x1="198.2" y1="411.9" x2="205.7" y2="408.5" stroke="#6a6a6a" stroke-width="2.4"/><line x1="205.7" y1="408.5" x2="213.3" y2="405.1" stroke="#d0d0d0" stroke-width="2.4"/><line x1="289.1" y1="421.8" x2="289.5" y2="422.5" stroke="#6a6a6a" stroke-width="2.4"/><line x1="289.5" y1="422.5" x2="289.8" y2="423.3" stroke="#d0d0d0" stroke-width="2.4"/><line x1="298.9" y1="266.6" x2="296.3" y2="271.5" stroke="#6a6a6a" stroke-width="2.4"/><line x1="296.3" y1="271.5" x2="293.6" y2="276.4" stroke="#d0d0d0" stroke-width="2.4"/><line x1="198.9" y1="239.1" x2="200.8" y2="231.6" stroke="#6a6a6a" stroke-width="2.4"/><line x1="200.8" y1="231.6" x2="202.7" y2="224.0" stroke="#d0d0d0" stroke-width="2.4"/><line x1="311.8" y1="228.5" x2="305.7" y2="226.3" stroke="#6a6a6a" stroke-width="2.4"/><line x1="305.7" y1="226.3" x2="299.7" y2="224.0" stroke="#d0d0d0" stroke-width="2.4"/><line x1="310.2" y1="290.8" x2="312.1" y2="284.4" stroke="#6a6a6a" stroke-width="2.4"/><line x1="312.1" y1="284.4" x2="314.0" y2="277.9" stroke="#d0d0d0" stroke-width="2.4"/><line x1="308.7" y1="335.3" x2="305.0" y2="329.7" stroke="#6a6a6a" stroke-width="2.4"/><line x1="305.0" y1="329.7" x2="301.2" y2="324.0" stroke="#d0d0d0" stroke-width="2.4"/><line x1="280.0" y1="374.9" x2="272.9" y2="379.1" stroke="#6a6a6a" stroke-width="2.4"/><line x1="272.9" y1="379.1" x2="265.7" y2="383.2" stroke="#d0d0d0" stroke-width="2.4"/><line x1="291.4" y1="334.6" x2="286.5" y2="329.7" stroke="#6a6a6a" stroke-width="2.4"/><line x1="286.5" y1="329.7" x2="281.5" y2="324.8" stroke="#d0d0d0" stroke-width="2.4"/><line x1="412.5" y1="177.9" x2="408.0" y2="176.4" stroke="#6a6a6a" stroke-width="2.4"/><line x1="408.0" y1="176.4" x2="403.4" y2="174.9" stroke="#d0d0d0" stroke-width="2.4"/><line x1="306.5" y1="206.6" x2="311.0" y2="209.3" stroke="#6a6a6a" stroke-width="2.4"/><line x1="311.0" y1="209.3" x2="315.5" y2="211.9" stroke="#d0d0d0" stroke-width="2.4"/><line x1="201.9" y1="277.2" x2="208.7" y2="277.2" stroke="#6a6a6a" stroke-width="2.4"/><line x1="208.7" y1="277.2" x2="215.5" y2="277.2" stroke="#d0d0d0" stroke-width="2.4"/><line x1="367.9" y1="381.7" x2="366.1" y2="381.3" stroke="#6a6a6a" stroke-width="2.4"/><line x1="366.1" y1="381.3" x2="364.2" y2="381.0" stroke="#d0d0d0" stroke-width="2.4"/><line x1="310.2" y1="290.8" x2="313.3" y2="287.4" stroke="#6a6a6a" stroke-width="2.4"/><line x1="313.3" y1="287.4" x2="316.3" y2="284.0" stroke="#d0d0d0" stroke-width="2.4"/><line x1="173.2" y1="395.3" x2="168.3" y2="401.7" stroke="#6a6a6a" stroke-width="2.4"/><line x1="168.3" y1="401.7" x2="163.4" y2="408.2" stroke="#d0d0d0" stroke-width="2.4"/><line x1="280.0" y1="374.9" x2="284.9" y2="374.2" stroke="#6a6a6a" stroke-width="2.4"/><line x1="284.9" y1="374.2" x2="289.8" y2="373.4" stroke="#d0d0d0" stroke-width="2.4"/><line x1="364.2" y1="208.2" x2="363.4" y2="216.5" stroke="#6a6a6a" stroke-width="2.4"/><line x1="363.4" y1="216.5" x2="362.7" y2="224.8" stroke="#d0d0d0" stroke-width="2.4"/><line x1="330.6" y1="388.5" x2="324.2" y2="393.4" stroke="#6a6a6a" stroke-width="2.4"/><line x1="324.2" y1="393.4" x2="317.8" y2="398.3" stroke="#d0d0d0" stroke-width="2.4"/><line x1="200.4" y1="374.9" x2="205.3" y2="373.4" stroke="#6a6a6a" stroke-width="2.4"/><line x1="205.3" y1="373.4" x2="210.2" y2="371.9" stroke="#d0d0d0" stroke-width="2.4"/><line x1="405.0" y1="418.0" x2="401.2" y2="423.3" stroke="#6a6a6a" stroke-width="2.4"/><line x1="401.2" y1="423.3" x2="397.4" y2="428.5" stroke="#d0d0d0" stroke-width="2.4"/><line x1="371.0" y1="176.4" x2="377.4" y2="173.8" stroke="#6a6a6a" stroke-width="2.4"/><line x1="377.4" y1="173.8" x2="383.8" y2="171.1" stroke="#d0d0d0" stroke-width="2.4"/><line x1="201.9" y1="277.2" x2="195.9" y2="274.2" stroke="#6a6a6a" stroke-width="2.4"/><line x1="195.9" y1="274.2" x2="189.8" y2="271.1" stroke="#d0d0d0" stroke-width="2.4"/><line x1="308.0" y1="174.2" x2="313.6" y2="177.2" stroke="#6a6a6a" stroke-width="2.4"/><line x1="313.6" y1="177.2" x2="319.3" y2="180.2" stroke="#d0d0d0" stroke-width="2.4"/><line x1="293.6" y1="240.6" x2="294.8" y2="235.0" stroke="#6a6a6a" stroke-width="2.4"/><line x1="294.8" y1="235.0" x2="295.9" y2="229.3" stroke="#d0d0d0" stroke-width="2.4"/><line x1="161.1" y1="426.3" x2="160.4" y2="417.6" stroke="#6a6a6a" stroke-width="2.4"/><line x1="160.4" y1="417.6" x2="159.6" y2="408.9" stroke="#d0d0d0" stroke-width="2.4"/><line x1="306.5" y1="206.6" x2="313.6" y2="206.6" stroke="#6a6a6a" stroke-width="2.4"/><line x1="313.6" y1="206.6" x2="320.8" y2="206.6" stroke="#d0d0d0" stroke-width="2.4"/><line x1="277.8" y1="245.2" x2="275.9" y2="238.0" stroke="#6a6a6a" stroke-width="2.4"/><line x1="275.9" y1="238.0" x2="274.0" y2="230.8" stroke="#d0d0d0" stroke-width="2.4"/><line x1="408.7" y1="205.1" x2="415.2" y2="199.8" stroke="#6a6a6a" stroke-width="2.4"/><line x1="415.2" y1="199.8" x2="421.6" y2="194.6" stroke="#d0d0d0" stroke-width="2.4"/><line x1="308.7" y1="335.3" x2="311.0" y2="333.5" stroke="#6a6a6a" stroke-width="2.4"/><line x1="311.0" y1="333.5" x2="313.3" y2="331.6" stroke="#d0d0d0" stroke-width="2.4"/><line x1="174.0" y1="425.5" x2="179.3" y2="428.5" stroke="#6a6a6a" stroke-width="2.4"/><line x1="179.3" y1="428.5" x2="184.6" y2="431.6" stroke="#d0d0d0" stroke-width="2.4"/><line x1="311.8" y1="228.5" x2="317.0" y2="230.4" stroke="#6a6a6a" stroke-width="2.4"/><line x1="317.0" y1="230.4" x2="322.3" y2="232.3" stroke="#d0d0d0" stroke-width="2.4"/><line x1="310.2" y1="290.8" x2="316.3" y2="289.3" stroke="#6a6a6a" stroke-width="2.4"/><line x1="316.3" y1="289.3" x2="322.3" y2="287.8" stroke="#d0d0d0" stroke-width="2.4"/><line x1="327.6" y1="337.6" x2="325.0" y2="335.0" stroke="#6a6a6a" stroke-width="2.4"/><line x1="325.0" y1="335.0" x2="322.3" y2="332.3" stroke="#d0d0d0" stroke-width="2.4"/><line x1="255.9" y1="424.0" x2="259.6" y2="428.2" stroke="#6a6a6a" stroke-width="2.4"/><line x1="259.6" y1="428.2" x2="263.4" y2="432.3" stroke="#d0d0d0" stroke-width="2.4"/><line x1="412.5" y1="363.6" x2="417.4" y2="370.0" stroke="#6a6a6a" stroke-width="2.4"/><line x1="417.4" y1="370.0" x2="422.3" y2="376.4" stroke="#d0d0d0" stroke-width="2.4"/><line x1="405.0" y1="418.0" x2="413.6" y2="419.1" stroke="#6a6a6a" stroke-width="2.4"/><line x1="413.6" y1="419.1" x2="422.3" y2="420.2" stroke="#d0d0d0" stroke-width="2.4"/><line x1="298.9" y1="266.6" x2="306.8" y2="267.0" stroke="#6a6a6a" stroke-width="2.4"/><line x1="306.8" y1="267.0" x2="314.8" y2="267.4" stroke="#d0d0d0" stroke-width="2.4"/><line x1="367.9" y1="381.7" x2="366.8" y2="374.5" stroke="#6a6a6a" stroke-width="2.4"/><line x1="366.8" y1="374.5" x2="365.7" y2="367.4" stroke="#d0d0d0" stroke-width="2.4"/><line x1="198.2" y1="327.0" x2="200.0" y2="330.1" stroke="#6a6a6a" stroke-width="2.4"/><line x1="200.0" y1="330.1" x2="201.9" y2="333.1" stroke="#d0d0d0" stroke-width="2.4"/><line x1="371.0" y1="176.4" x2="363.8" y2="176.4" stroke="#6a6a6a" stroke-width="2.4"/><line x1="363.8" y1="176.4" x2="356.6" y2="176.4" stroke="#d0d0d0" stroke-width="2.4"/><line x1="374.0" y1="353.0" x2="374.0" y2="359.8" stroke="#6a6a6a" stroke-width="2.4"/><line x1="374.0" y1="359.8" x2="374.0" y2="366.6" stroke="#d0d0d0" stroke-width="2.4"/><line x1="323.1" y1="315.7" x2="323.5" y2="311.6" stroke="#6a6a6a" stroke-width="2.4"/><line x1="323.5" y1="311.6" x2="323.8" y2="307.4" stroke="#d0d0d0" stroke-width="2.4"/><line x1="174.0" y1="425.5" x2="175.5" y2="429.7" stroke="#6a6a6a" stroke-width="2.4"/><line x1="175.5" y1="429.7" x2="177.0" y2="433.8" stroke="#d0d0d0" stroke-width="2.4"/><line x1="216.3" y1="178.7" x2="220.4" y2="184.4" stroke="#6a6a6a" stroke-width="2.4"/><line x1="220.4" y1="184.4" x2="224.6" y2="190.0" stroke="#d0d0d0" stroke-width="2.4"/><line x1="327.6" y1="337.6" x2="323.1" y2="336.1" stroke="#6a6a6a" stroke-width="2.4"/><line x1="323.1" y1="336.1" x2="318.5" y2="334.6" stroke="#d0d0d0" stroke-width="2.4"/><line x1="216.3" y1="178.7" x2="212.9" y2="171.9" stroke="#6a6a6a" stroke-width="2.4"/><line x1="212.9" y1="171.9" x2="209.5" y2="165.1" stroke="#d0d0d0" stroke-width="2.4"/><line x1="308.0" y1="174.2" x2="301.9" y2="169.6" stroke="#6a6a6a" stroke-width="2.4"/><line x1="301.9" y1="169.6" x2="295.9" y2="165.1" stroke="#d0d0d0" stroke-width="2.4"/><line x1="371.0" y1="176.4" x2="371.0" y2="170.8" stroke="#6a6a6a" stroke-width="2.4"/><line x1="371.0" y1="170.8" x2="371.0" y2="165.1" stroke="#d0d0d0" stroke-width="2.4"/><line x1="412.5" y1="177.9" x2="417.4" y2="171.5" stroke="#6a6a6a" stroke-width="2.4"/><line x1="417.4" y1="171.5" x2="422.3" y2="165.1" stroke="#d0d0d0" stroke-width="2.4"/><line x1="308.0" y1="174.2" x2="312.1" y2="169.5" stroke="#6a6a6a" stroke-width="2.4"/><line x1="312.1" y1="169.5" x2="316.3" y2="164.8" stroke="#d0d0d0" stroke-width="2.4"/><line x1="409.5" y1="221.0" x2="409.1" y2="228.2" stroke="#6a6a6a" stroke-width="2.4"/><line x1="409.1" y1="228.2" x2="408.7" y2="235.3" stroke="#d0d0d0" stroke-width="2.4"/><line x1="160.4" y1="215.7" x2="157.4" y2="207.4" stroke="#6a6a6a" stroke-width="2.4"/><line x1="157.4" y1="207.4" x2="154.4" y2="199.1" stroke="#d0d0d0" stroke-width="2.4"/><line x1="160.4" y1="215.7" x2="157.4" y2="218.0" stroke="#6a6a6a" stroke-width="2.4"/><line x1="157.4" y1="218.0" x2="154.4" y2="220.2" stroke="#d0d0d0" stroke-width="2.4"/><line x1="160.4" y1="215.7" x2="157.4" y2="221.8" stroke="#6a6a6a" stroke-width="2.4"/><line x1="157.4" y1="221.8" x2="154.4" y2="227.8" stroke="#d0d0d0" stroke-width="2.4"/><line x1="167.2" y1="294.6" x2="160.8" y2="292.3" stroke="#6a6a6a" stroke-width="2.4"/><line x1="160.8" y1="292.3" x2="154.4" y2="290.0" stroke="#d0d0d0" stroke-width="2.4"/><line x1="200.4" y1="374.9" x2="194.4" y2="369.6" stroke="#6a6a6a" stroke-width="2.4"/><line x1="194.4" y1="369.6" x2="188.3" y2="364.4" stroke="#d0d0d0" stroke-width="2.4"/><line x1="161.1" y1="426.3" x2="157.7" y2="429.7" stroke="#6a6a6a" stroke-width="2.4"/><line x1="157.7" y1="429.7" x2="154.4" y2="433.1" stroke="#d0d0d0" stroke-width="2.4"/><line x1="298.9" y1="266.6" x2="293.2" y2="265.1" stroke="#6a6a6a" stroke-width="2.4"/><line x1="293.2" y1="265.1" x2="287.6" y2="263.6" stroke="#d0d0d0" stroke-width="2.4"/><line x1="398.5" y1="250.5" x2="392.3" y2="257.0" stroke="#6a6a6a" stroke-width="2.4"/><line x1="392.3" y1="257.0" x2="386.1" y2="263.6" stroke="#d0d0d0" stroke-width="2.4"/><line x1="367.9" y1="381.7" x2="360.8" y2="384.0" stroke="#6a6a6a" stroke-width="2.4"/><line x1="360.8" y1="384.0" x2="353.6" y2="386.3" stroke="#d0d0d0" stroke-width="2.4"/><line x1="170.5" y1="348.9" x2="173.8" y2="342.9" stroke="#6a6a6a" stroke-width="2.4"/><line x1="173.8" y1="342.9" x2="177.0" y2="336.9" stroke="#d0d0d0" stroke-width="2.4"/><line x1="238.2" y1="374.2" x2="232.5" y2="379.5" stroke="#6a6a6a" stroke-width="2.4"/><line x1="232.5" y1="379.5" x2="226.9" y2="384.7" stroke="#d0d0d0" stroke-width="2.4"/><line x1="283.8" y1="362.8" x2="275.9" y2="362.8" stroke="#6a6a6a" stroke-width="2.4"/><line x1="275.9" y1="362.8" x2="267.9" y2="362.8" stroke="#d0d0d0" stroke-width="2.4"/><line x1="216.3" y1="178.7" x2="221.8" y2="175.5" stroke="#6a6a6a" stroke-width="2.4"/><line x1="221.8" y1="175.5" x2="227.3" y2="172.4" stroke="#d0d0d0" stroke-width="2.4"/><line x1="398.5" y1="250.5" x2="393.4" y2="244.0" stroke="#6a6a6a" stroke-width="2.4"/><line x1="393.4" y1="244.0" x2="388.3" y2="237.6" stroke="#d0d0d0" stroke-width="2.4"/><line x1="203.4" y1="266.6" x2="210.2" y2="264.4" stroke="#6a6a6a" stroke-width="2.4"/><line x1="210.2" y1="264.4" x2="217.0" y2="262.1" stroke="#d0d0d0" stroke-width="2.4"/><line x1="238.2" y1="374.2" x2="244.8" y2="377.9" stroke="#6a6a6a" stroke-width="2.4"/><line x1="244.8" y1="377.9" x2="251.3" y2="381.7" stroke="#d0d0d0" stroke-width="2.4"/><line x1="165.7" y1="252.7" x2="172.5" y2="256.6" stroke="#6a6a6a" stroke-width="2.4"/><line x1="172.5" y1="256.6" x2="179.3" y2="260.6" stroke="#d0d0d0" stroke-width="2.4"/><line x1="255.1" y1="262.8" x2="252.8" y2="265.9" stroke="#6a6a6a" stroke-width="2.4"/><line x1="252.8" y1="265.9" x2="250.6" y2="268.9" stroke="#d0d0d0" stroke-width="2.4"/><line x1="311.8" y1="228.5" x2="312.9" y2="234.2" stroke="#6a6a6a" stroke-width="2.4"/><line x1="312.9" y1="234.2" x2="314.0" y2="239.9" stroke="#d0d0d0" stroke-width="2.4"/><line x1="342.3" y1="221.0" x2="336.1" y2="225.2" stroke="#6a6a6a" stroke-width="2.4"/><line x1="336.1" y1="225.2" x2="329.9" y2="229.3" stroke="#d0d0d0" stroke-width="2.4"/><line x1="198.9" y1="239.1" x2="191.0" y2="239.9" stroke="#6a6a6a" stroke-width="2.4"/><line x1="191.0" y1="239.9" x2="183.1" y2="240.6" stroke="#d0d0d0" stroke-width="2.4"/><line x1="277.8" y1="245.2" x2="275.1" y2="252.1" stroke="#6a6a6a" stroke-width="2.4"/><line x1="275.1" y1="252.1" x2="272.5" y2="259.1" stroke="#d0d0d0" stroke-width="2.4"/><line x1="238.2" y1="374.2" x2="234.8" y2="367.7" stroke="#6a6a6a" stroke-width="2.4"/><line x1="234.8" y1="367.7" x2="231.4" y2="361.3" stroke="#d0d0d0" stroke-width="2.4"/><line x1="330.6" y1="388.5" x2="331.0" y2="381.0" stroke="#6a6a6a" stroke-width="2.4"/><line x1="331.0" y1="381.0" x2="331.4" y2="373.4" stroke="#d0d0d0" stroke-width="2.4"/><line x1="247.6" y1="335.3" x2="247.9" y2="333.5" stroke="#6a6a6a" stroke-width="2.4"/><line x1="247.9" y1="333.5" x2="248.3" y2="331.6" stroke="#d0d0d0" stroke-width="2.4"/><line x1="255.9" y1="424.0" x2="252.1" y2="429.3" stroke="#6a6a6a" stroke-width="2.4"/><line x1="252.1" y1="429.3" x2="248.3" y2="434.6" stroke="#d0d0d0" stroke-width="2.4"/><line x1="165.7" y1="252.7" x2="161.9" y2="247.4" stroke="#6a6a6a" stroke-width="2.4"/><line x1="161.9" y1="247.4" x2="158.1" y2="242.1" stroke="#d0d0d0" stroke-width="2.4"/><line x1="198.2" y1="327.0" x2="197.8" y2="334.6" stroke="#6a6a6a" stroke-width="2.4"/><line x1="197.8" y1="334.6" x2="197.4" y2="342.1" stroke="#d0d0d0" stroke-width="2.4"/><line x1="247.6" y1="335.3" x2="255.9" y2="338.7" stroke="#6a6a6a" stroke-width="2.4"/><line x1="255.9" y1="338.7" x2="264.2" y2="342.1" stroke="#d0d0d0" stroke-width="2.4"/><line x1="327.6" y1="337.6" x2="329.5" y2="339.9" stroke="#6a6a6a" stroke-width="2.4"/><line x1="329.5" y1="339.9" x2="331.4" y2="342.1" stroke="#d0d0d0" stroke-width="2.4"/><line x1="235.9" y1="241.3" x2="234.2" y2="234.9" stroke="#6a6a6a" stroke-width="2.4"/><line x1="234.2" y1="234.9" x2="232.4" y2="228.5" stroke="#d0d0d0" stroke-width="2.4"/><line x1="283.8" y1="362.8" x2="279.3" y2="360.2" stroke="#6a6a6a" stroke-width="2.4"/><line x1="279.3" y1="360.2" x2="274.7" y2="357.6" stroke="#d0d0d0" stroke-width="2.4"/><line x1="291.4" y1="334.6" x2="286.5" y2="338.7" stroke="#6a6a6a" stroke-width="2.4"/><line x1="286.5" y1="338.7" x2="281.5" y2="342.9" stroke="#d0d0d0" stroke-width="2.4"/><line x1="398.5" y1="250.5" x2="402.9" y2="253.6" stroke="#6a6a6a" stroke-width="2.4"/><line x1="402.9" y1="253.6" x2="407.2" y2="256.8" stroke="#d0d0d0" stroke-width="2.4"/><line x1="247.6" y1="335.3" x2="246.8" y2="328.2" stroke="#6a6a6a" stroke-width="2.4"/><line x1="246.8" y1="328.2" x2="246.0" y2="321.0" stroke="#d0d0d0" stroke-width="2.4"/><line x1="374.0" y1="353.0" x2="382.3" y2="354.5" stroke="#6a6a6a" stroke-width="2.4"/><line x1="382.3" y1="354.5" x2="390.6" y2="356.0" stroke="#d0d0d0" stroke-width="2.4"/><line x1="330.6" y1="388.5" x2="338.3" y2="393.4" stroke="#6a6a6a" stroke-width="2.4"/><line x1="338.3" y1="393.4" x2="346.0" y2="398.3" stroke="#d0d0d0" stroke-width="2.4"/><line x1="235.9" y1="241.3" x2="230.3" y2="247.9" stroke="#6a6a6a" stroke-width="2.4"/><line x1="230.3" y1="247.9" x2="224.6" y2="254.5" stroke="#d0d0d0" stroke-width="2.4"/><line x1="198.9" y1="239.1" x2="205.0" y2="242.5" stroke="#6a6a6a" stroke-width="2.4"/><line x1="205.0" y1="242.5" x2="211.0" y2="245.9" stroke="#d0d0d0" stroke-width="2.4"/><line x1="247.6" y1="335.3" x2="241.4" y2="340.6" stroke="#6a6a6a" stroke-width="2.4"/><line x1="241.4" y1="340.6" x2="235.2" y2="345.9" stroke="#d0d0d0" stroke-width="2.4"/><line x1="293.6" y1="240.6" x2="297.8" y2="243.7" stroke="#6a6a6a" stroke-width="2.4"/><line x1="297.8" y1="243.7" x2="301.9" y2="246.7" stroke="#d0d0d0" stroke-width="2.4"/><line x1="323.1" y1="315.7" x2="329.9" y2="313.4" stroke="#6a6a6a" stroke-width="2.4"/><line x1="329.9" y1="313.4" x2="336.7" y2="311.2" stroke="#d0d0d0" stroke-width="2.4"/><line x1="327.6" y1="337.6" x2="332.1" y2="335.0" stroke="#6a6a6a" stroke-width="2.4"/><line x1="332.1" y1="335.0" x2="336.7" y2="332.3" stroke="#d0d0d0" stroke-width="2.4"/><line x1="198.9" y1="239.1" x2="198.9" y2="246.1" stroke="#6a6a6a" stroke-width="2.4"/><line x1="198.9" y1="246.1" x2="198.9" y2="253.0" stroke="#d0d0d0" stroke-width="2.4"/><line x1="370.2" y1="239.9" x2="367.8" y2="244.0" stroke="#6a6a6a" stroke-width="2.4"/><line x1="367.8" y1="244.0" x2="365.3" y2="248.2" stroke="#d0d0d0" stroke-width="2.4"/><line x1="255.1" y1="262.8" x2="248.7" y2="260.6" stroke="#6a6a6a" stroke-width="2.4"/><line x1="248.7" y1="260.6" x2="242.3" y2="258.3" stroke="#d0d0d0" stroke-width="2.4"/><line x1="293.6" y1="240.6" x2="295.5" y2="246.5" stroke="#6a6a6a" stroke-width="2.4"/><line x1="295.5" y1="246.5" x2="297.4" y2="252.3" stroke="#d0d0d0" stroke-width="2.4"/><line x1="327.6" y1="337.6" x2="328.4" y2="344.9" stroke="#6a6a6a" stroke-width="2.4"/><line x1="328.4" y1="344.9" x2="329.1" y2="352.3" stroke="#d0d0d0" stroke-width="2.4"/><line x1="412.5" y1="363.6" x2="412.5" y2="357.4" stroke="#6a6a6a" stroke-width="2.4"/><line x1="412.5" y1="357.4" x2="412.5" y2="351.2" stroke="#d0d0d0" stroke-width="2.4"/><line x1="342.3" y1="221.0" x2="340.2" y2="211.9" stroke="#6a6a6a" stroke-width="2.4"/><line x1="340.2" y1="211.9" x2="338.2" y2="202.9" stroke="#d0d0d0" stroke-width="2.4"/><line x1="327.6" y1="337.6" x2="334.2" y2="332.7" stroke="#6a6a6a" stroke-width="2.4"/><line x1="334.2" y1="332.7" x2="340.8" y2="327.8" stroke="#d0d0d0" stroke-width="2.4"/><line x1="283.8" y1="362.8" x2="288.0" y2="356.8" stroke="#6a6a6a" stroke-width="2.4"/><line x1="288.0" y1="356.8" x2="292.1" y2="350.8" stroke="#d0d0d0" stroke-width="2.4"/></g>
<g fill="url(#gC)"><circle cx="198.2" cy="411.9" r="6.2"/><circle cx="306.5" cy="206.6" r="6.2"/><circle cx="173.2" cy="395.3" r="6.2"/><circle cx="405.0" cy="418.0" r="6.2"/><circle cx="408.7" cy="205.1" r="6.2"/><circle cx="274.7" cy="419.5" r="6.2"/><circle cx="310.2" cy="290.8" r="6.2"/><circle cx="409.5" cy="221.0" r="6.2"/><circle cx="289.1" cy="421.8" r="6.2"/><circle cx="367.9" cy="381.7" r="6.2"/><circle cx="412.5" cy="177.9" r="6.2"/><circle cx="201.9" cy="277.2" r="6.2"/><circle cx="167.2" cy="294.6" r="6.2"/><circle cx="306.5" cy="423.3" r="6.2"/><circle cx="371.0" cy="176.4" r="6.2"/><circle cx="200.4" cy="374.9" r="6.2"/><circle cx="280.0" cy="374.9" r="6.2"/><circle cx="174.0" cy="425.5" r="6.2"/><circle cx="308.0" cy="174.2" r="6.2"/><circle cx="364.2" cy="208.2" r="6.2"/><circle cx="216.3" cy="178.7" r="6.2"/><circle cx="198.2" cy="327.0" r="6.2"/><circle cx="311.8" cy="228.5" r="6.2"/><circle cx="161.1" cy="426.3" r="6.2"/><circle cx="160.4" cy="215.7" r="6.2"/><circle cx="323.1" cy="315.7" r="6.2"/><circle cx="203.4" cy="266.6" r="6.2"/><circle cx="298.9" cy="266.6" r="6.2"/><circle cx="255.9" cy="424.0" r="6.2"/><circle cx="291.4" cy="334.6" r="6.2"/><circle cx="308.7" cy="335.3" r="6.2"/><circle cx="412.5" cy="363.6" r="6.2"/><circle cx="255.1" cy="262.8" r="6.2"/><circle cx="283.8" cy="362.8" r="6.2"/><circle cx="327.6" cy="337.6" r="6.2"/><circle cx="198.9" cy="239.1" r="6.2"/><circle cx="370.2" cy="239.9" r="6.2"/><circle cx="293.6" cy="240.6" r="6.2"/><circle cx="330.6" cy="388.5" r="6.2"/><circle cx="247.6" cy="335.3" r="6.2"/><circle cx="235.9" cy="241.3" r="6.2"/><circle cx="277.8" cy="245.2" r="6.2"/><circle cx="165.7" cy="252.7" r="6.2"/><circle cx="374.0" cy="353.0" r="6.2"/><circle cx="170.5" cy="348.9" r="6.2"/><circle cx="342.3" cy="221.0" r="6.2"/><circle cx="398.5" cy="250.5" r="6.2"/><circle cx="238.2" cy="374.2" r="6.2"/></g>
<g fill="url(#gO)"><circle cx="390.6" cy="303.6" r="5.3"/><circle cx="387.6" cy="405.1" r="5.3"/><circle cx="184.6" cy="195.3" r="5.3"/><circle cx="389.8" cy="193.8" r="5.3"/><circle cx="381.5" cy="204.4" r="5.3"/><circle cx="294.4" cy="391.5" r="5.3"/><circle cx="287.6" cy="290.0" r="5.3"/><circle cx="195.1" cy="390.0" r="5.3"/><circle cx="380.0" cy="405.9" r="5.3"/><circle cx="384.6" cy="389.3" r="5.3"/><circle cx="380.8" cy="389.3" r="5.3"/><circle cx="281.5" cy="212.7" r="5.3"/><circle cx="277.8" cy="312.7" r="5.3"/><circle cx="393.6" cy="312.7" r="5.3"/><circle cx="277.8" cy="287.0" r="5.3"/><circle cx="203.4" cy="189.3" r="5.3"/><circle cx="286.8" cy="213.4" r="5.3"/><circle cx="176.0" cy="187.8" r="5.3"/><circle cx="378.5" cy="314.2" r="5.3"/><circle cx="375.5" cy="302.1" r="5.3"/><circle cx="300.4" cy="284.0" r="5.3"/><circle cx="206.5" cy="184.0" r="5.3"/><circle cx="206.5" cy="202.9" r="5.3"/><circle cx="176.3" cy="316.5" r="5.3"/><circle cx="394.4" cy="316.5" r="5.3"/><circle cx="373.2" cy="398.3" r="5.3"/><circle cx="407.2" cy="295.3" r="5.3"/><circle cx="207.2" cy="384.7" r="5.3"/><circle cx="183.1" cy="182.0" r="5.3"/><circle cx="276.3" cy="218.0" r="5.3"/><circle cx="208.0" cy="287.0" r="5.3"/><circle cx="271.7" cy="190.0" r="5.3"/><circle cx="305.7" cy="381.7" r="5.3"/><circle cx="381.5" cy="281.0" r="5.3"/><circle cx="270.2" cy="205.1" r="5.3"/><circle cx="277.8" cy="179.9" r="5.3"/><circle cx="295.9" cy="220.2" r="5.3"/><circle cx="310.2" cy="187.8" r="5.3"/><circle cx="296.6" cy="179.5" r="5.3"/><circle cx="269.5" cy="296.1" r="5.3"/><circle cx="195.9" cy="221.0" r="5.3"/><circle cx="211.0" cy="297.6" r="5.3"/><circle cx="169.5" cy="177.9" r="5.3"/><circle cx="267.9" cy="305.1" r="5.3"/><circle cx="167.6" cy="205.1" r="5.3"/><circle cx="412.5" cy="305.1" r="5.3"/><circle cx="412.5" cy="321.0" r="5.3"/><circle cx="181.5" cy="177.2" r="5.3"/><circle cx="267.2" cy="197.6" r="5.3"/><circle cx="367.2" cy="179.5" r="5.3"/><circle cx="167.2" cy="379.5" r="5.3"/><circle cx="266.4" cy="323.3" r="5.3"/><circle cx="366.4" cy="281.0" r="5.3"/><circle cx="366.4" cy="411.2" r="5.3"/><circle cx="168.7" cy="224.0" r="5.3"/><circle cx="314.0" cy="214.2" r="5.3"/><circle cx="314.0" cy="318.7" r="5.3"/><circle cx="405.7" cy="324.0" r="5.3"/><circle cx="165.7" cy="222.5" r="5.3"/><circle cx="164.9" cy="311.9" r="5.3"/><circle cx="406.5" cy="274.9" r="5.3"/><circle cx="264.9" cy="408.9" r="5.3"/><circle cx="388.3" cy="225.5" r="5.3"/><circle cx="215.5" cy="419.5" r="5.3"/><circle cx="180.5" cy="226.3" r="5.3"/><circle cx="217.0" cy="196.8" r="5.3"/><circle cx="417.0" cy="279.5" r="5.3"/><circle cx="217.0" cy="426.3" r="5.3"/><circle cx="317.0" cy="418.0" r="5.3"/><circle cx="162.7" cy="306.6" r="5.3"/><circle cx="275.5" cy="372.7" r="5.3"/><circle cx="410.2" cy="372.7" r="5.3"/><circle cx="317.8" cy="224.8" r="5.3"/><circle cx="417.8" cy="284.0" r="5.3"/><circle cx="261.9" cy="177.9" r="5.3"/><circle cx="161.9" cy="280.2" r="5.3"/><circle cx="361.9" cy="281.0" r="5.3"/><circle cx="367.2" cy="371.9" r="5.3"/><circle cx="218.5" cy="192.3" r="5.3"/><circle cx="289.1" cy="228.5" r="5.3"/><circle cx="418.5" cy="185.5" r="5.3"/><circle cx="418.5" cy="205.1" r="5.3"/><circle cx="295.9" cy="428.5" r="5.3"/><circle cx="418.5" cy="400.6" r="5.3"/><circle cx="261.1" cy="211.9" r="5.3"/><circle cx="361.1" cy="191.5" r="5.3"/><circle cx="261.1" cy="418.7" r="5.3"/><circle cx="300.4" cy="170.4" r="5.3"/><circle cx="174.7" cy="270.4" r="5.3"/><circle cx="220.1" cy="290.8" r="5.3"/><circle cx="201.2" cy="430.1" r="5.3"/><circle cx="259.6" cy="277.2" r="5.3"/><circle cx="259.6" cy="379.5" r="5.3"/><circle cx="190.6" cy="169.3" r="5.3"/><circle cx="304.2" cy="330.8" r="5.3"/><circle cx="373.2" cy="330.8" r="5.3"/><circle cx="258.9" cy="368.9" r="5.3"/><circle cx="302.7" cy="368.9" r="5.3"/><circle cx="358.9" cy="380.2" r="5.3"/><circle cx="196.6" cy="231.6" r="5.3"/><circle cx="421.6" cy="208.9" r="5.3"/><circle cx="421.6" cy="218.0" r="5.3"/><circle cx="267.9" cy="331.6" r="5.3"/><circle cx="221.6" cy="369.6" r="5.3"/><circle cx="358.1" cy="208.2" r="5.3"/><circle cx="422.3" cy="177.2" r="5.3"/><circle cx="422.3" cy="226.3" r="5.3"/><circle cx="222.3" cy="299.8" r="5.3"/><circle cx="222.3" cy="330.1" r="5.3"/><circle cx="193.6" cy="332.3" r="5.3"/><circle cx="422.3" cy="316.5" r="5.3"/><circle cx="422.3" cy="324.0" r="5.3"/><circle cx="379.3" cy="332.3" r="5.3"/><circle cx="422.3" cy="390.0" r="5.3"/><circle cx="357.4" cy="302.1" r="5.3"/><circle cx="223.1" cy="321.0" r="5.3"/><circle cx="323.1" cy="403.6" r="5.3"/><circle cx="318.5" cy="433.1" r="5.3"/><circle cx="289.8" cy="433.1" r="5.3"/><circle cx="374.7" cy="433.1" r="5.3"/><circle cx="256.6" cy="204.4" r="5.3"/><circle cx="356.6" cy="202.1" r="5.3"/><circle cx="356.6" cy="227.8" r="5.3"/><circle cx="168.7" cy="266.6" r="5.3"/><circle cx="405.0" cy="366.6" r="5.3"/><circle cx="205.7" cy="233.8" r="5.3"/><circle cx="256.6" cy="333.8" r="5.3"/><circle cx="369.5" cy="433.8" r="5.3"/><circle cx="271.7" cy="365.9" r="5.3"/><circle cx="372.5" cy="234.6" r="5.3"/><circle cx="295.1" cy="165.1" r="5.3"/><circle cx="364.2" cy="165.1" r="5.3"/><circle cx="255.1" cy="293.8" r="5.3"/><circle cx="158.9" cy="365.1" r="5.3"/><circle cx="419.3" cy="235.3" r="5.3"/><circle cx="154.4" cy="187.8" r="5.3"/><circle cx="354.4" cy="182.5" r="5.3"/><circle cx="354.4" cy="219.5" r="5.3"/><circle cx="154.4" cy="303.6" r="5.3"/><circle cx="154.4" cy="315.0" r="5.3"/><circle cx="154.4" cy="322.5" r="5.3"/><circle cx="154.4" cy="374.9" r="5.3"/><circle cx="354.4" cy="424.8" r="5.3"/><circle cx="153.9" cy="204.4" r="5.3"/><circle cx="155.9" cy="236.1" r="5.3"/><circle cx="326.1" cy="271.1" r="5.3"/><circle cx="353.6" cy="165.1" r="5.3"/><circle cx="158.1" cy="263.6" r="5.3"/><circle cx="153.6" cy="279.5" r="5.3"/><circle cx="253.6" cy="324.0" r="5.3"/><circle cx="355.1" cy="363.6" r="5.3"/><circle cx="226.9" cy="170.4" r="5.3"/><circle cx="352.1" cy="190.0" r="5.3"/><circle cx="360.4" cy="262.1" r="5.3"/><circle cx="417.0" cy="262.1" r="5.3"/><circle cx="152.1" cy="367.4" r="5.3"/><circle cx="305.7" cy="362.1" r="5.3"/><circle cx="415.5" cy="362.1" r="5.3"/><circle cx="168.7" cy="238.4" r="5.3"/><circle cx="228.4" cy="221.0" r="5.3"/><circle cx="251.3" cy="193.8" r="5.3"/><circle cx="251.3" cy="405.1" r="5.3"/><circle cx="229.1" cy="315.0" r="5.3"/><circle cx="229.1" cy="384.0" r="5.3"/><circle cx="229.1" cy="426.3" r="5.3"/><circle cx="250.6" cy="400.6" r="5.3"/><circle cx="329.9" cy="237.6" r="5.3"/><circle cx="249.8" cy="414.2" r="5.3"/><circle cx="249.4" cy="176.4" r="5.3"/><circle cx="395.9" cy="240.6" r="5.3"/><circle cx="349.1" cy="433.8" r="5.3"/><circle cx="374.0" cy="258.3" r="5.3"/><circle cx="348.3" cy="385.5" r="5.3"/><circle cx="258.1" cy="342.1" r="5.3"/><circle cx="332.1" cy="265.1" r="5.3"/><circle cx="153.6" cy="257.6" r="5.3"/><circle cx="247.6" cy="293.1" r="5.3"/><circle cx="347.6" cy="321.8" r="5.3"/><circle cx="254.4" cy="242.9" r="5.3"/><circle cx="183.8" cy="342.9" r="5.3"/><circle cx="209.5" cy="342.9" r="5.3"/><circle cx="346.8" cy="207.4" r="5.3"/><circle cx="233.7" cy="271.1" r="5.3"/><circle cx="233.7" cy="424.0" r="5.3"/><circle cx="246.0" cy="281.7" r="5.3"/><circle cx="330.6" cy="256.0" r="5.3"/><circle cx="346.0" cy="263.6" r="5.3"/><circle cx="406.5" cy="356.0" r="5.3"/><circle cx="334.6" cy="188.5" r="5.3"/><circle cx="154.4" cy="344.4" r="5.3"/><circle cx="372.5" cy="344.4" r="5.3"/><circle cx="334.4" cy="433.8" r="5.3"/><circle cx="280.8" cy="255.3" r="5.3"/><circle cx="345.3" cy="278.7" r="5.3"/><circle cx="345.3" cy="303.6" r="5.3"/><circle cx="345.3" cy="418.7" r="5.3"/><circle cx="214.0" cy="245.3" r="5.3"/><circle cx="267.9" cy="245.2" r="5.3"/><circle cx="235.2" cy="287.8" r="5.3"/><circle cx="355.1" cy="346.7" r="5.3"/><circle cx="335.2" cy="400.6" r="5.3"/><circle cx="244.5" cy="276.4" r="5.3"/><circle cx="156.6" cy="354.5" r="5.3"/><circle cx="244.5" cy="374.2" r="5.3"/><circle cx="294.4" cy="354.5" r="5.3"/><circle cx="344.5" cy="408.9" r="5.3"/><circle cx="336.7" cy="371.9" r="5.3"/><circle cx="335.9" cy="418.7" r="5.3"/><circle cx="242.0" cy="364.1" r="5.3"/><circle cx="237.4" cy="218.0" r="5.3"/><circle cx="241.5" cy="165.1" r="5.3"/><circle cx="337.4" cy="220.0" r="5.3"/><circle cx="226.1" cy="347.4" r="5.3"/><circle cx="322.4" cy="250.5" r="5.3"/><circle cx="347.2" cy="252.0" r="5.3"/><circle cx="342.0" cy="306.8" r="5.3"/><circle cx="242.0" cy="433.5" r="5.3"/><circle cx="239.7" cy="204.0" r="5.3"/><circle cx="239.7" cy="232.3" r="5.3"/><circle cx="381.5" cy="248.2" r="5.3"/><circle cx="238.9" cy="300.1" r="5.3"/><circle cx="305.1" cy="348.2" r="5.3"/><circle cx="339.7" cy="256.7" r="5.3"/><circle cx="337.4" cy="266.6" r="5.3"/><circle cx="240.5" cy="414.3" r="5.3"/><circle cx="397.2" cy="351.2" r="5.3"/><circle cx="239.7" cy="318.0" r="5.3"/><circle cx="364.9" cy="349.7" r="5.3"/><circle cx="341.5" cy="393.1" r="5.3"/></g>
<g fill="url(#gH)"><circle cx="188.3" cy="399.1" r="2.35"/><circle cx="292.1" cy="296.8" r="2.35"/><circle cx="295.1" cy="195.3" r="2.35"/><circle cx="395.9" cy="197.6" r="2.35"/><circle cx="298.2" cy="408.2" r="2.35"/><circle cx="194.4" cy="390.8" r="2.35"/><circle cx="180.0" cy="300.6" r="2.35"/><circle cx="380.0" cy="393.8" r="2.35"/><circle cx="401.2" cy="401.4" r="2.35"/><circle cx="300.4" cy="188.5" r="2.35"/><circle cx="201.9" cy="291.5" r="2.35"/><circle cx="402.7" cy="207.4" r="2.35"/><circle cx="302.7" cy="411.9" r="2.35"/><circle cx="203.4" cy="187.0" r="2.35"/><circle cx="375.5" cy="198.3" r="2.35"/><circle cx="175.5" cy="395.3" r="2.35"/><circle cx="374.7" cy="193.1" r="2.35"/><circle cx="177.5" cy="215.7" r="2.35"/><circle cx="174.0" cy="408.2" r="2.35"/><circle cx="208.0" cy="316.5" r="2.35"/><circle cx="172.5" cy="281.7" r="2.35"/><circle cx="295.1" cy="281.7" r="2.35"/><circle cx="288.3" cy="381.7" r="2.35"/><circle cx="394.4" cy="218.7" r="2.35"/><circle cx="308.7" cy="309.7" r="2.35"/><circle cx="373.2" cy="219.5" r="2.35"/><circle cx="400.4" cy="180.2" r="2.35"/><circle cx="268.7" cy="405.1" r="2.35"/><circle cx="268.7" cy="414.2" r="2.35"/><circle cx="311.8" cy="202.9" r="2.35"/><circle cx="411.8" cy="219.5" r="2.35"/><circle cx="200.4" cy="421.8" r="2.35"/><circle cx="291.4" cy="377.9" r="2.35"/><circle cx="180.8" cy="322.5" r="2.35"/><circle cx="192.1" cy="422.5" r="2.35"/><circle cx="400.4" cy="422.5" r="2.35"/><circle cx="186.8" cy="276.9" r="2.35"/><circle cx="213.3" cy="405.1" r="2.35"/><circle cx="289.8" cy="423.3" r="2.35"/><circle cx="293.6" cy="276.4" r="2.35"/><circle cx="202.7" cy="224.0" r="2.35"/><circle cx="299.7" cy="224.0" r="2.35"/><circle cx="314.0" cy="277.9" r="2.35"/><circle cx="301.2" cy="324.0" r="2.35"/><circle cx="265.7" cy="383.2" r="2.35"/><circle cx="281.5" cy="324.8" r="2.35"/><circle cx="403.4" cy="174.9" r="2.35"/><circle cx="315.5" cy="211.9" r="2.35"/><circle cx="215.5" cy="277.2" r="2.35"/><circle cx="364.2" cy="381.0" r="2.35"/><circle cx="316.3" cy="284.0" r="2.35"/><circle cx="163.4" cy="408.2" r="2.35"/><circle cx="289.8" cy="373.4" r="2.35"/><circle cx="362.7" cy="224.8" r="2.35"/><circle cx="317.8" cy="398.3" r="2.35"/><circle cx="210.2" cy="371.9" r="2.35"/><circle cx="397.4" cy="428.5" r="2.35"/><circle cx="383.8" cy="171.1" r="2.35"/><circle cx="189.8" cy="271.1" r="2.35"/><circle cx="394.4" cy="371.1" r="2.35"/><circle cx="319.3" cy="180.2" r="2.35"/><circle cx="295.9" cy="229.3" r="2.35"/><circle cx="176.3" cy="330.1" r="2.35"/><circle cx="159.6" cy="408.9" r="2.35"/><circle cx="320.8" cy="206.6" r="2.35"/><circle cx="274.0" cy="230.8" r="2.35"/><circle cx="421.6" cy="194.6" r="2.35"/><circle cx="313.3" cy="331.6" r="2.35"/><circle cx="184.6" cy="431.6" r="2.35"/><circle cx="322.3" cy="232.3" r="2.35"/><circle cx="322.3" cy="287.8" r="2.35"/><circle cx="322.3" cy="332.3" r="2.35"/><circle cx="263.4" cy="432.3" r="2.35"/><circle cx="422.3" cy="376.4" r="2.35"/><circle cx="422.3" cy="420.2" r="2.35"/><circle cx="314.8" cy="267.4" r="2.35"/><circle cx="365.7" cy="367.4" r="2.35"/><circle cx="201.9" cy="333.1" r="2.35"/><circle cx="356.6" cy="176.4" r="2.35"/><circle cx="374.0" cy="366.6" r="2.35"/><circle cx="323.8" cy="307.4" r="2.35"/><circle cx="177.0" cy="433.8" r="2.35"/><circle cx="224.6" cy="190.0" r="2.35"/><circle cx="318.5" cy="334.6" r="2.35"/><circle cx="209.5" cy="165.1" r="2.35"/><circle cx="295.9" cy="165.1" r="2.35"/><circle cx="371.0" cy="165.1" r="2.35"/><circle cx="422.3" cy="165.1" r="2.35"/><circle cx="316.3" cy="164.8" r="2.35"/><circle cx="408.7" cy="235.3" r="2.35"/><circle cx="154.4" cy="199.1" r="2.35"/><circle cx="154.4" cy="220.2" r="2.35"/><circle cx="154.4" cy="227.8" r="2.35"/><circle cx="154.4" cy="290.0" r="2.35"/><circle cx="188.3" cy="364.4" r="2.35"/><circle cx="154.4" cy="433.1" r="2.35"/><circle cx="287.6" cy="263.6" r="2.35"/><circle cx="386.1" cy="263.6" r="2.35"/><circle cx="183.1" cy="363.6" r="2.35"/><circle cx="353.6" cy="386.3" r="2.35"/><circle cx="177.0" cy="336.9" r="2.35"/><circle cx="226.9" cy="384.7" r="2.35"/><circle cx="267.9" cy="362.8" r="2.35"/><circle cx="227.3" cy="172.4" r="2.35"/><circle cx="388.3" cy="237.6" r="2.35"/><circle cx="217.0" cy="262.1" r="2.35"/><circle cx="251.3" cy="381.7" r="2.35"/><circle cx="179.3" cy="260.6" r="2.35"/><circle cx="250.6" cy="268.9" r="2.35"/><circle cx="314.0" cy="239.9" r="2.35"/><circle cx="329.9" cy="229.3" r="2.35"/><circle cx="183.1" cy="240.6" r="2.35"/><circle cx="272.5" cy="259.1" r="2.35"/><circle cx="231.4" cy="361.3" r="2.35"/><circle cx="331.4" cy="373.4" r="2.35"/><circle cx="248.3" cy="331.6" r="2.35"/><circle cx="248.3" cy="434.6" r="2.35"/><circle cx="158.1" cy="242.1" r="2.35"/><circle cx="197.4" cy="342.1" r="2.35"/><circle cx="264.2" cy="342.1" r="2.35"/><circle cx="331.4" cy="342.1" r="2.35"/><circle cx="232.4" cy="228.5" r="2.35"/><circle cx="274.7" cy="357.6" r="2.35"/><circle cx="281.5" cy="342.9" r="2.35"/><circle cx="407.2" cy="256.8" r="2.35"/><circle cx="246.0" cy="321.0" r="2.35"/><circle cx="189.1" cy="356.0" r="2.35"/><circle cx="390.6" cy="356.0" r="2.35"/><circle cx="346.0" cy="398.3" r="2.35"/><circle cx="224.6" cy="254.5" r="2.35"/><circle cx="211.0" cy="245.9" r="2.35"/><circle cx="235.2" cy="345.9" r="2.35"/><circle cx="301.9" cy="246.7" r="2.35"/><circle cx="336.7" cy="311.2" r="2.35"/><circle cx="336.7" cy="332.3" r="2.35"/><circle cx="198.9" cy="253.0" r="2.35"/><circle cx="365.3" cy="248.2" r="2.35"/><circle cx="242.3" cy="258.3" r="2.35"/><circle cx="297.4" cy="252.3" r="2.35"/><circle cx="329.1" cy="352.3" r="2.35"/><circle cx="412.5" cy="351.2" r="2.35"/><circle cx="338.2" cy="202.9" r="2.35"/><circle cx="340.8" cy="327.8" r="2.35"/><circle cx="292.1" cy="350.8" r="2.35"/></g>
</svg></div>
<div class="t" style="left:493px;top:584px;font-size:10.8px;color:#000;-webkit-text-stroke:0.2px #000">C50 H200 O250</div>
<!-- toolbar -->
<div class="a" style="left:1px;top:610px;width:573px;height:52px;background:linear-gradient(#7b7070 0%,#9e9696 22%,#bdb8b8 45%,#cdcbcb 70%,#d9d9d9 100%)"></div>
<svg class="a" style="left:0;top:600px" width="575" height="62" viewBox="0 600 575 62">
<defs>
<clipPath id="pc"><rect x="66.3" y="620" width="441.4" height="28" rx="14"/></clipPath>
<linearGradient id="rg" x1="0" y1="0" x2="0" y2="1"><stop offset="0" stop-color="#8a8484" stop-opacity="0.75"/><stop offset="1" stop-color="#a8a4a4" stop-opacity="0.3"/></linearGradient>
</defs>
<rect x="65" y="651" width="444" height="32" rx="16" fill="url(#rg)"/>
<rect x="64" y="617.5" width="446" height="33" rx="16.5" fill="#fdfdfd"/>
<rect x="66.3" y="620" width="441.4" height="28" rx="14" fill="#2a0707"/>
<g clip-path="url(#pc)"><rect x="60" y="600" width="454" height="34.7" rx="22" ry="9" fill="#5e4d4d"/></g>
<g fill="#dcd7d7" stroke="none">
<polygon points="84.2,627.8 93.9,636.4 91.3,637.7 87.3,635.4 87,640.6 84.3,640.9"/>
</g>
<g font-family="Liberation Sans" font-size="18" fill="#dcd7d7" stroke="#dcd7d7" stroke-width="0.5">
<text transform="matrix(0.9 0 0 1 112.6 641.2)">C</text>
<text transform="matrix(0.9 0 0 1 144.6 641.2)">O</text>
<text transform="matrix(0.9 0 0 1 176.8 641.2)">N</text>
<text transform="matrix(0.9 0 0 1 209.2 641.2)">H</text>
<text transform="matrix(0.9 0 0 1 238 641.2)">X</text>
</g>
<polygon points="252,636 258.5,636 255.2,641.8" fill="#dcd7d7"/>
<polygon points="278.6,627.2 284.9,630.8 284.9,637.8 278.6,641.3 272.3,637.8 272.3,630.8" fill="none" stroke="#dcd7d7" stroke-width="2.6"/>
<g stroke="#dcd7d7" stroke-width="1.9" fill="none" stroke-linecap="round">
<line x1="302.5" y1="634.5" x2="319" y2="634.5"/>
<line x1="306.6" y1="627.3" x2="315" y2="641.7"/>
<line x1="315" y1="627.3" x2="306.6" y2="641.7"/>
<polyline points="304,632.5 305.5,634.5 304,636.5"/>
<polyline points="317.6,632.5 316.1,634.5 317.6,636.5"/>
<polyline points="305.6,629.8 308.2,630.2 309,627.6"/>
<polyline points="312.6,627.6 313.4,630.2 316,629.8"/>
<polyline points="305.6,639.2 308.2,638.8 309,641.4"/>
<polyline points="312.6,641.4 313.4,638.8 316,639.2"/>
</g>
<polygon points="336.2,631 349.5,627.6 349.5,637 336.2,640.2" fill="none" stroke="#dcd7d7" stroke-width="2"/>
<polygon points="422.50,625.70 424.79,631.14 430.68,631.64 426.21,635.51 427.55,641.26 422.50,638.20 417.45,641.26 418.79,635.51 414.32,631.64 420.21,631.14" fill="#dcd7d7"/>
<g stroke="#cfcaca" fill="none" stroke-width="1.1">
<rect x="447" y="625.5" width="16.2" height="16"/>
<rect x="451.5" y="630.2" width="7" height="6.3"/>
<line x1="447" y1="625.5" x2="451.5" y2="630.2"/><line x1="463.2" y1="625.5" x2="458.5" y2="630.2"/>
<line x1="447" y1="641.5" x2="451.5" y2="636.5"/><line x1="463.2" y1="641.5" x2="458.5" y2="636.5"/>
</g>
<g fill="#dcd7d7"><circle cx="481.4" cy="629.6" r="3.3"/><circle cx="481.4" cy="638.9" r="3.3"/><circle cx="490.4" cy="638.9" r="3.3"/></g>
<circle cx="490.4" cy="629.6" r="2.7" fill="none" stroke="#dcd7d7" stroke-width="1"/>
</svg>

<!-- splitter -->
<div class="a" style="left:575px;top:33px;width:1px;height:629px;background:#8c8c8c"></div>
<div class="a" style="left:575px;top:33px;width:6px;height:1px;background:#8c8c8c"></div>
<div class="a" style="left:576px;top:34px;width:4px;height:628px;background:#e8e8e8"></div>
<div class="a" style="left:580px;top:34px;width:1px;height:628px;background:#fbfbfb"></div>

<!-- right panel -->
<div class="a" style="left:581px;top:32px;width:469px;height:630px;background:#e5e5e5"></div>
<div class="a" style="left:574px;top:41px;width:8px;height:1px;background:#fdfdfd"></div>
<div class="a" style="left:574px;top:42px;width:1px;height:7px;background:#fdfdfd"></div>
<div class="a" style="left:575px;top:42px;width:6px;height:6px;background:#e6e6e6"></div>
<div class="a" style="left:581px;top:42px;width:1px;height:7px;background:#8c8c8c"></div>
<div class="a" style="left:575px;top:48px;width:7px;height:1px;background:#8c8c8c"></div>
<!-- tab bar -->
<div class="a" style="left:582px;top:33px;width:467px;height:30px;background:#bfbfbf;border-bottom:1px solid #8a8a8a;box-sizing:border-box;height:31px"></div>
<svg class="a" style="left:582px;top:33px" width="64" height="30"><polygon points="0,0 56,0 63,14.5 56,30 0,30" fill="#f4ae42"/></svg>
<div class="a" style="left:684px;top:33px;width:1px;height:30px;background:#8a8a8a"></div>
<div class="a" style="left:685px;top:33px;width:47px;height:31px;background:#e6e6e6"></div>
<div class="a" style="left:732px;top:33px;width:1px;height:30px;background:#8a8a8a"></div>
<div class="t" style="left:587px;top:41.7px;font-size:12.2px;font-weight:bold">ReaxFF</div>
<div class="t" style="left:650.3px;top:41px;font-size:13px;font-weight:bold;letter-spacing:0.45px">Main</div>
<div class="t" style="left:690px;top:41px;font-size:13px;font-weight:bold;letter-spacing:0.35px">Model</div>
<div class="t" style="left:736.5px;top:41px;font-size:13px;font-weight:bold">Properties</div>
<div class="t" style="left:809px;top:41px;font-size:13px;font-weight:bold;letter-spacing:0.22px">Details</div>
<svg class="a" style="left:1020px;top:38px" width="22" height="20"><circle cx="9.9" cy="8.7" r="5" fill="none" stroke="#111" stroke-width="1.6"/><line x1="13.4" y1="12.3" x2="17.4" y2="16.3" stroke="#111" stroke-width="2.4"/></svg>

<!-- MD header -->
<div class="t" style="left:805px;top:76.5px;font-size:13px;font-weight:bold">MD</div>
<svg class="a" style="left:962px;top:70px" width="18" height="18"><circle cx="9" cy="9" r="9" fill="#555"/><polyline points="10.9,4 5.6,8.9 10.9,14" fill="none" stroke="#fff" stroke-width="1.5"/></svg>
<svg class="a" style="left:992px;top:70px" width="18" height="18"><circle cx="9" cy="9" r="9" fill="#bbb"/><polyline points="6.6,4 12,8.9 6.6,14" fill="none" stroke="#ececec" stroke-width="1.5"/></svg>
<svg class="a" style="left:1022px;top:70px" width="18" height="18"><circle cx="9" cy="9" r="9" fill="#555"/><path d="M7.1,6.7 C7.1,5.1 8.1,4.6 9.3,4.6 C10.6,4.6 11.3,5.4 11.3,6.4 C11.3,7.6 10.4,8.1 9.8,8.7 C9.4,9.2 9.3,9.7 9.3,10.8" fill="none" stroke="#f2f2f2" stroke-width="1.6"/><rect x="8.4" y="12" width="1.8" height="1.9" fill="#f2f2f2"/></svg>


<!-- form -->
<div class="t lbl" style="left:590px;top:117px">Number of steps:</div>
<div class="inp" style="left:752px;top:113px;width:74px;height:21px;background:#fdfde1"></div>
<div class="t val" style="left:752px;top:117.5px;width:71.5px">30000</div>
<div class="t lbl" style="left:590px;top:141px">Time step:</div>
<div class="inp" style="left:752px;top:138px;width:74px;height:21px"></div>
<div class="t val" style="left:752px;top:142px;width:71.5px">0.25</div>
<div class="t lbl" style="left:836px;top:141px">fs</div>
<svg class="a" style="left:848.5px;top:146.5px" width="8" height="7"><polygon points="0,0.6 6.6,0.6 3.3,6.2" fill="#111"/></svg>

<div class="t lbl" style="left:590px;top:192px">Trajectory Options</div>
<div class="t lbl" style="left:590px;top:216px">Sample frequency:</div>
<div class="inp" style="left:752px;top:213px;width:74px;height:21px"></div>
<div class="t val" style="left:752px;top:217px;width:71.5px">100</div>

<div class="t lbl" style="left:590px;top:267px">Thermostat</div>
<div class="t lbl" style="left:590px;top:292px">Barostat</div>

<div class="t lbl" style="left:590px;top:346px;letter-spacing:0.2px">Initial velocities:</div>
<div class="inp" style="left:752px;top:338px;width:166px;height:29px;background:#eeeeee"></div>
<div class="a" style="left:900px;top:340px;width:1px;height:25px;background:#8a8a8a"></div>
<div class="t" style="left:764px;top:346.5px;font-size:12.6px">Random</div>
<svg class="a" style="left:905px;top:351px" width="8" height="6"><polygon points="0,0.3 7,0.3 3.5,4.6" fill="#444"/></svg>

<div class="t lbl" style="left:590px;top:375.5px;color:#aaa;-webkit-text-stroke:0.15px #aaa">File:</div>
<div class="a" style="left:753px;top:373px;width:27px;height:19px;box-sizing:border-box;border:1px dotted #666;background:#ebebeb"></div>
<svg class="a" style="left:759px;top:379px" width="16" height="9"><defs><pattern id="chk" width="2" height="2" patternUnits="userSpaceOnUse"><rect width="1" height="1" fill="#444"/><rect x="1" y="1" width="1" height="1" fill="#444"/></pattern></defs><path d="M3,0 h6 l1,1 h3 v2 h-10 z M0,2.5 h14 v5.5 h-1 l-1,1 h-10 l-1.5,-2 z" fill="url(#chk)"/></svg>
<div class="inp" style="left:785px;top:372px;width:232px;height:21px;background:#e6e6e6"></div>

<div class="t lbl" style="left:590px;top:401.5px;letter-spacing:0.45px">Initial temperature:</div>
<div class="inp" style="left:752px;top:398px;width:74px;height:21px"></div>
<div class="t lbl" style="left:836px;top:401px">K</div>
<svg class="a" style="left:847.5px;top:406px" width="8" height="7"><polygon points="0,0.6 6.4,0.6 3.2,6.2" fill="#111"/></svg>

<div class="t lbl" style="left:590px;top:452px;letter-spacing:0.19px">Checkpoint frequency:</div>
<div class="inp" style="left:752px;top:448px;width:74px;height:21px"></div>
<div class="t val" style="left:752px;top:452.5px;width:71.5px">1000</div>
<div class="t lbl" style="left:590px;top:477.5px;letter-spacing:0.3px">Restart from:</div>
<div class="a" style="left:753px;top:475px;width:27px;height:19px;box-sizing:border-box;border:1px solid #8a8a8a;border-bottom:2px solid #6a6a6a;background:#ededed"></div>
<svg class="a" style="left:759px;top:479px" width="16" height="12"><path d="M2.5,0.5 h5 l1,1 h5 v8 h-1 v-6.5 h-10 z" fill="#555"/><path d="M0.5,4 h12.5 l-0.8,6 h-11 z" fill="#555"/></svg>
<div class="inp" style="left:785px;top:474px;width:232px;height:21px;background:#ededed"></div>
<svg class="a" style="left:1022px;top:189px" width="18" height="18"><circle cx="9" cy="9" r="9" fill="#555"/><polyline points="7.2,5 11,9 7.2,13" fill="none" stroke="#fff" stroke-width="1.5"/></svg>
<svg class="a" style="left:1022px;top:264px" width="18" height="18"><circle cx="9" cy="9" r="9" fill="#555"/><polyline points="7.2,5 11,9 7.2,13" fill="none" stroke="#fff" stroke-width="1.5"/></svg>
<svg class="a" style="left:1022px;top:289px" width="18" height="18"><circle cx="9" cy="9" r="9" fill="#555"/><polyline points="7.2,5 11,9 7.2,13" fill="none" stroke="#fff" stroke-width="1.5"/></svg>

</body></html>
